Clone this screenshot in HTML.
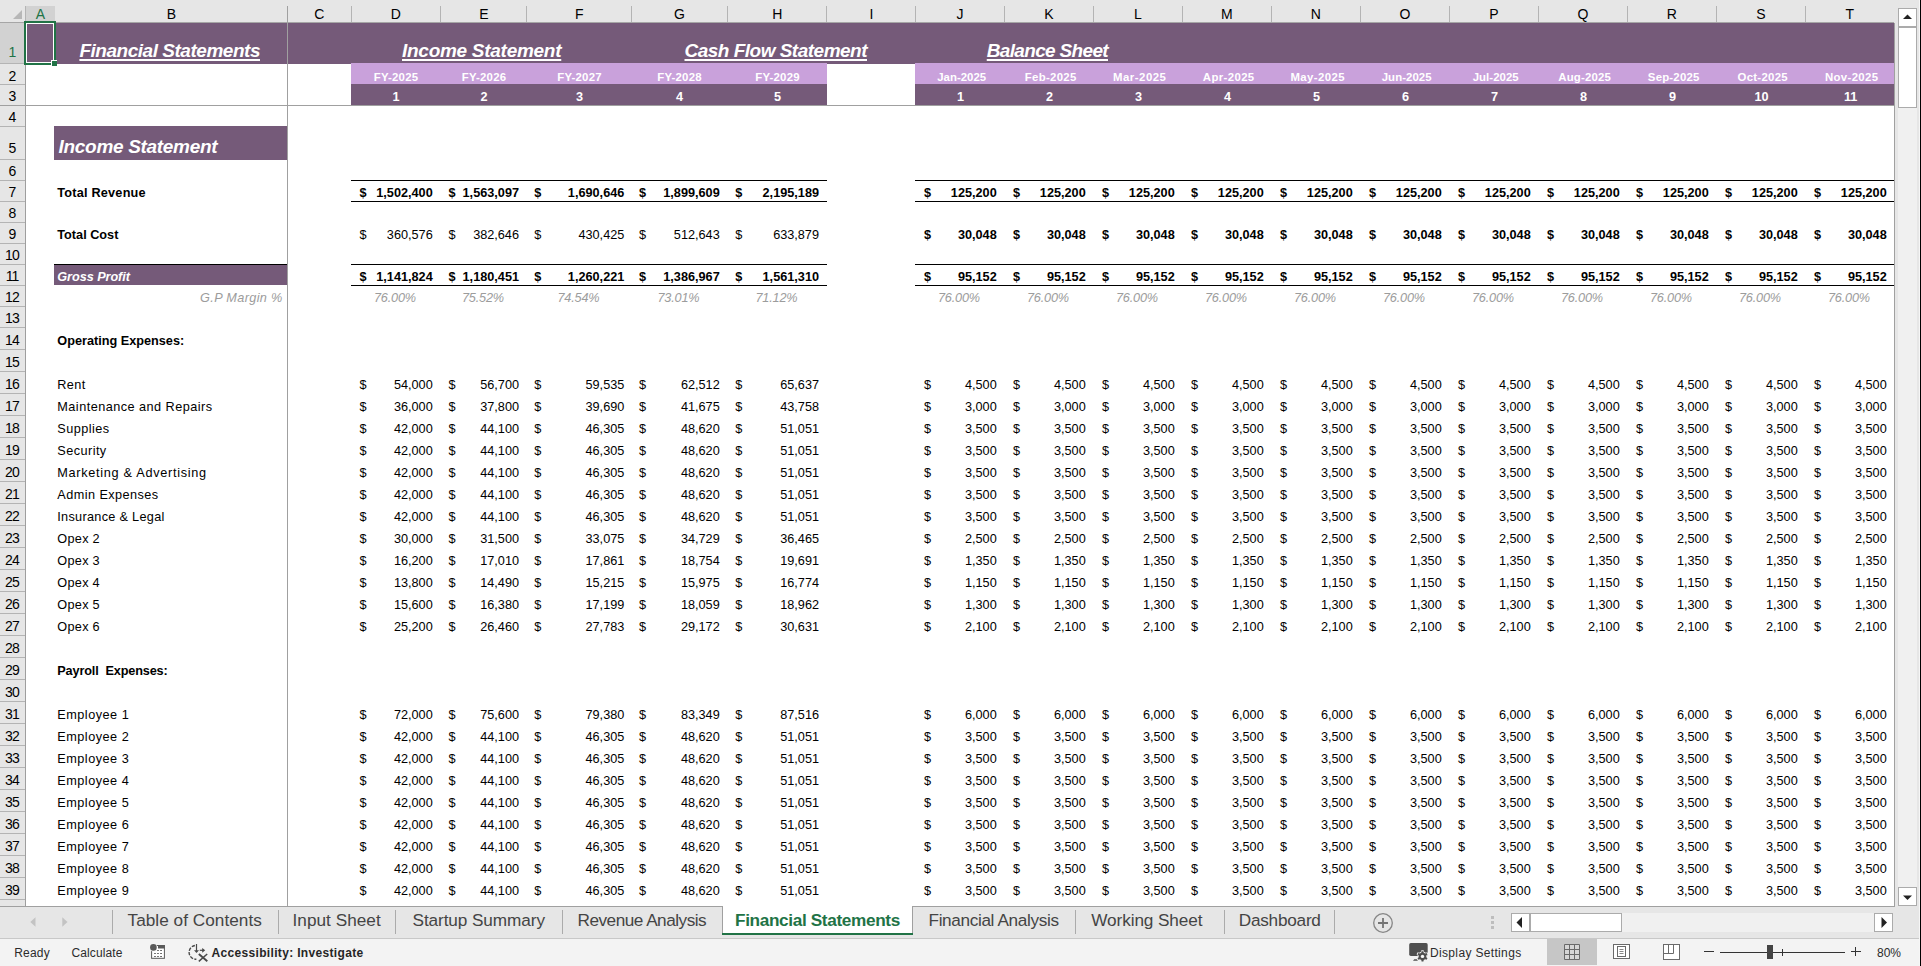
<!DOCTYPE html>
<html><head><meta charset="utf-8"><title>Financial Statements</title><style>
html,body{margin:0;padding:0;overflow:hidden;}
html{width:1921px;height:966px;}
body{width:1921px;height:966px;overflow:hidden;background:#fff;position:relative;font-family:"Liberation Sans",sans-serif;}
body>div,body>svg{position:absolute;}
.t{white-space:pre;overflow:visible;}
</style></head><body>
<div style="left:0px;top:0px;width:1921px;height:23px;background:#e6e6e6;"></div>
<div style="left:0px;top:23px;width:25px;height:883px;background:#e6e6e6;"></div>
<div style="left:26px;top:6px;width:29px;height:16px;background:#d2d2d2;"></div>
<div style="left:0px;top:23px;width:25px;height:41px;background:#d2d2d2;"></div>
<div style="left:0px;top:22px;width:1894px;height:1px;background:#a6a6a6;"></div>
<div style="left:25px;top:23px;width:1px;height:883px;background:#9e9e9e;"></div>
<div style="left:351px;top:6px;width:1px;height:16px;background:#b4b4b4;"></div>
<div style="left:440px;top:6px;width:1px;height:16px;background:#b4b4b4;"></div>
<div style="left:526px;top:6px;width:1px;height:16px;background:#b4b4b4;"></div>
<div style="left:631px;top:6px;width:1px;height:16px;background:#b4b4b4;"></div>
<div style="left:727px;top:6px;width:1px;height:16px;background:#b4b4b4;"></div>
<div style="left:826px;top:6px;width:1px;height:16px;background:#b4b4b4;"></div>
<div style="left:915px;top:6px;width:1px;height:16px;background:#b4b4b4;"></div>
<div style="left:1004px;top:6px;width:1px;height:16px;background:#b4b4b4;"></div>
<div style="left:1093px;top:6px;width:1px;height:16px;background:#b4b4b4;"></div>
<div style="left:1182px;top:6px;width:1px;height:16px;background:#b4b4b4;"></div>
<div style="left:1271px;top:6px;width:1px;height:16px;background:#b4b4b4;"></div>
<div style="left:1360px;top:6px;width:1px;height:16px;background:#b4b4b4;"></div>
<div style="left:1449px;top:6px;width:1px;height:16px;background:#b4b4b4;"></div>
<div style="left:1538px;top:6px;width:1px;height:16px;background:#b4b4b4;"></div>
<div style="left:1627px;top:6px;width:1px;height:16px;background:#b4b4b4;"></div>
<div style="left:1716px;top:6px;width:1px;height:16px;background:#b4b4b4;"></div>
<div style="left:1805px;top:6px;width:1px;height:16px;background:#b4b4b4;"></div>
<div style="left:25px;top:6px;width:1px;height:16px;background:#b4b4b4;"></div>
<svg style="left:13px;top:10px" width="9" height="9"><path d="M9 0 L9 9 L0 9 Z" fill="#b7b7b7"/></svg>
<div class="t " style="top:2px;height:24px;line-height:24px;font-size:14px;color:#217346;left:-19.60px;width:120px;text-align:center;">A</div>
<div class="t " style="top:2px;height:24px;line-height:24px;font-size:14px;color:#000;left:111.40px;width:120px;text-align:center;">B</div>
<div class="t " style="top:2px;height:24px;line-height:24px;font-size:14px;color:#000;left:259.40px;width:120px;text-align:center;">C</div>
<div class="t " style="top:2px;height:24px;line-height:24px;font-size:14px;color:#000;left:335.90px;width:120px;text-align:center;">D</div>
<div class="t " style="top:2px;height:24px;line-height:24px;font-size:14px;color:#000;left:423.90px;width:120px;text-align:center;">E</div>
<div class="t " style="top:2px;height:24px;line-height:24px;font-size:14px;color:#000;left:519.40px;width:120px;text-align:center;">F</div>
<div class="t " style="top:2px;height:24px;line-height:24px;font-size:14px;color:#000;left:619.40px;width:120px;text-align:center;">G</div>
<div class="t " style="top:2px;height:24px;line-height:24px;font-size:14px;color:#000;left:717.40px;width:120px;text-align:center;">H</div>
<div class="t " style="top:2px;height:24px;line-height:24px;font-size:14px;color:#000;left:811.40px;width:120px;text-align:center;">I</div>
<div class="t " style="top:2px;height:24px;line-height:24px;font-size:14px;color:#000;left:899.90px;width:120px;text-align:center;">J</div>
<div class="t " style="top:2px;height:24px;line-height:24px;font-size:14px;color:#000;left:988.90px;width:120px;text-align:center;">K</div>
<div class="t " style="top:2px;height:24px;line-height:24px;font-size:14px;color:#000;left:1077.90px;width:120px;text-align:center;">L</div>
<div class="t " style="top:2px;height:24px;line-height:24px;font-size:14px;color:#000;left:1166.90px;width:120px;text-align:center;">M</div>
<div class="t " style="top:2px;height:24px;line-height:24px;font-size:14px;color:#000;left:1255.90px;width:120px;text-align:center;">N</div>
<div class="t " style="top:2px;height:24px;line-height:24px;font-size:14px;color:#000;left:1344.90px;width:120px;text-align:center;">O</div>
<div class="t " style="top:2px;height:24px;line-height:24px;font-size:14px;color:#000;left:1433.90px;width:120px;text-align:center;">P</div>
<div class="t " style="top:2px;height:24px;line-height:24px;font-size:14px;color:#000;left:1522.90px;width:120px;text-align:center;">Q</div>
<div class="t " style="top:2px;height:24px;line-height:24px;font-size:14px;color:#000;left:1611.90px;width:120px;text-align:center;">R</div>
<div class="t " style="top:2px;height:24px;line-height:24px;font-size:14px;color:#000;left:1700.90px;width:120px;text-align:center;">S</div>
<div class="t " style="top:2px;height:24px;line-height:24px;font-size:14px;color:#000;left:1789.90px;width:120px;text-align:center;">T</div>
<div style="left:0px;top:63px;width:25px;height:1px;background:#b4b4b4;"></div>
<div class="t " style="top:40px;height:24px;line-height:24px;font-size:14px;color:#217346;left:-47.50px;width:120px;text-align:center;">1</div>
<div style="left:0px;top:84px;width:25px;height:1px;background:#b4b4b4;"></div>
<div class="t " style="top:64px;height:24px;line-height:24px;font-size:14px;color:#000;left:-47.50px;width:120px;text-align:center;">2</div>
<div style="left:0px;top:105px;width:25px;height:1px;background:#b4b4b4;"></div>
<div class="t " style="top:84px;height:24px;line-height:24px;font-size:14px;color:#000;left:-47.50px;width:120px;text-align:center;">3</div>
<div style="left:0px;top:126px;width:25px;height:1px;background:#b4b4b4;"></div>
<div class="t " style="top:105px;height:24px;line-height:24px;font-size:14px;color:#000;left:-47.50px;width:120px;text-align:center;">4</div>
<div style="left:0px;top:159px;width:25px;height:1px;background:#b4b4b4;"></div>
<div class="t " style="top:136px;height:24px;line-height:24px;font-size:14px;color:#000;left:-47.50px;width:120px;text-align:center;">5</div>
<div style="left:0px;top:180px;width:25px;height:1px;background:#b4b4b4;"></div>
<div class="t " style="top:159px;height:24px;line-height:24px;font-size:14px;color:#000;left:-47.50px;width:120px;text-align:center;">6</div>
<div style="left:0px;top:201px;width:25px;height:1px;background:#b4b4b4;"></div>
<div class="t " style="top:180px;height:24px;line-height:24px;font-size:14px;color:#000;left:-47.50px;width:120px;text-align:center;">7</div>
<div style="left:0px;top:222px;width:25px;height:1px;background:#b4b4b4;"></div>
<div class="t " style="top:201px;height:24px;line-height:24px;font-size:14px;color:#000;left:-47.50px;width:120px;text-align:center;">8</div>
<div style="left:0px;top:243px;width:25px;height:1px;background:#b4b4b4;"></div>
<div class="t " style="top:222px;height:24px;line-height:24px;font-size:14px;color:#000;left:-47.50px;width:120px;text-align:center;">9</div>
<div style="left:0px;top:264px;width:25px;height:1px;background:#b4b4b4;"></div>
<div class="t " style="top:243px;height:24px;line-height:24px;font-size:14px;color:#000;left:-47.90px;width:120px;text-align:center;letter-spacing:-0.8px;">10</div>
<div style="left:0px;top:285px;width:25px;height:1px;background:#b4b4b4;"></div>
<div class="t " style="top:264px;height:24px;line-height:24px;font-size:14px;color:#000;left:-47.90px;width:120px;text-align:center;letter-spacing:-0.8px;">11</div>
<div style="left:0px;top:306px;width:25px;height:1px;background:#b4b4b4;"></div>
<div class="t " style="top:285px;height:24px;line-height:24px;font-size:14px;color:#000;left:-47.90px;width:120px;text-align:center;letter-spacing:-0.8px;">12</div>
<div style="left:0px;top:327px;width:25px;height:1px;background:#b4b4b4;"></div>
<div class="t " style="top:306px;height:24px;line-height:24px;font-size:14px;color:#000;left:-47.90px;width:120px;text-align:center;letter-spacing:-0.8px;">13</div>
<div style="left:0px;top:349px;width:25px;height:1px;background:#b4b4b4;"></div>
<div class="t " style="top:328px;height:24px;line-height:24px;font-size:14px;color:#000;left:-47.90px;width:120px;text-align:center;letter-spacing:-0.8px;">14</div>
<div style="left:0px;top:371px;width:25px;height:1px;background:#b4b4b4;"></div>
<div class="t " style="top:350px;height:24px;line-height:24px;font-size:14px;color:#000;left:-47.90px;width:120px;text-align:center;letter-spacing:-0.8px;">15</div>
<div style="left:0px;top:393px;width:25px;height:1px;background:#b4b4b4;"></div>
<div class="t " style="top:372px;height:24px;line-height:24px;font-size:14px;color:#000;left:-47.90px;width:120px;text-align:center;letter-spacing:-0.8px;">16</div>
<div style="left:0px;top:415px;width:25px;height:1px;background:#b4b4b4;"></div>
<div class="t " style="top:394px;height:24px;line-height:24px;font-size:14px;color:#000;left:-47.90px;width:120px;text-align:center;letter-spacing:-0.8px;">17</div>
<div style="left:0px;top:437px;width:25px;height:1px;background:#b4b4b4;"></div>
<div class="t " style="top:416px;height:24px;line-height:24px;font-size:14px;color:#000;left:-47.90px;width:120px;text-align:center;letter-spacing:-0.8px;">18</div>
<div style="left:0px;top:459px;width:25px;height:1px;background:#b4b4b4;"></div>
<div class="t " style="top:438px;height:24px;line-height:24px;font-size:14px;color:#000;left:-47.90px;width:120px;text-align:center;letter-spacing:-0.8px;">19</div>
<div style="left:0px;top:481px;width:25px;height:1px;background:#b4b4b4;"></div>
<div class="t " style="top:460px;height:24px;line-height:24px;font-size:14px;color:#000;left:-47.90px;width:120px;text-align:center;letter-spacing:-0.8px;">20</div>
<div style="left:0px;top:503px;width:25px;height:1px;background:#b4b4b4;"></div>
<div class="t " style="top:482px;height:24px;line-height:24px;font-size:14px;color:#000;left:-47.90px;width:120px;text-align:center;letter-spacing:-0.8px;">21</div>
<div style="left:0px;top:525px;width:25px;height:1px;background:#b4b4b4;"></div>
<div class="t " style="top:504px;height:24px;line-height:24px;font-size:14px;color:#000;left:-47.90px;width:120px;text-align:center;letter-spacing:-0.8px;">22</div>
<div style="left:0px;top:547px;width:25px;height:1px;background:#b4b4b4;"></div>
<div class="t " style="top:526px;height:24px;line-height:24px;font-size:14px;color:#000;left:-47.90px;width:120px;text-align:center;letter-spacing:-0.8px;">23</div>
<div style="left:0px;top:569px;width:25px;height:1px;background:#b4b4b4;"></div>
<div class="t " style="top:548px;height:24px;line-height:24px;font-size:14px;color:#000;left:-47.90px;width:120px;text-align:center;letter-spacing:-0.8px;">24</div>
<div style="left:0px;top:591px;width:25px;height:1px;background:#b4b4b4;"></div>
<div class="t " style="top:570px;height:24px;line-height:24px;font-size:14px;color:#000;left:-47.90px;width:120px;text-align:center;letter-spacing:-0.8px;">25</div>
<div style="left:0px;top:613px;width:25px;height:1px;background:#b4b4b4;"></div>
<div class="t " style="top:592px;height:24px;line-height:24px;font-size:14px;color:#000;left:-47.90px;width:120px;text-align:center;letter-spacing:-0.8px;">26</div>
<div style="left:0px;top:635px;width:25px;height:1px;background:#b4b4b4;"></div>
<div class="t " style="top:614px;height:24px;line-height:24px;font-size:14px;color:#000;left:-47.90px;width:120px;text-align:center;letter-spacing:-0.8px;">27</div>
<div style="left:0px;top:657px;width:25px;height:1px;background:#b4b4b4;"></div>
<div class="t " style="top:636px;height:24px;line-height:24px;font-size:14px;color:#000;left:-47.90px;width:120px;text-align:center;letter-spacing:-0.8px;">28</div>
<div style="left:0px;top:679px;width:25px;height:1px;background:#b4b4b4;"></div>
<div class="t " style="top:658px;height:24px;line-height:24px;font-size:14px;color:#000;left:-47.90px;width:120px;text-align:center;letter-spacing:-0.8px;">29</div>
<div style="left:0px;top:701px;width:25px;height:1px;background:#b4b4b4;"></div>
<div class="t " style="top:680px;height:24px;line-height:24px;font-size:14px;color:#000;left:-47.90px;width:120px;text-align:center;letter-spacing:-0.8px;">30</div>
<div style="left:0px;top:723px;width:25px;height:1px;background:#b4b4b4;"></div>
<div class="t " style="top:702px;height:24px;line-height:24px;font-size:14px;color:#000;left:-47.90px;width:120px;text-align:center;letter-spacing:-0.8px;">31</div>
<div style="left:0px;top:745px;width:25px;height:1px;background:#b4b4b4;"></div>
<div class="t " style="top:724px;height:24px;line-height:24px;font-size:14px;color:#000;left:-47.90px;width:120px;text-align:center;letter-spacing:-0.8px;">32</div>
<div style="left:0px;top:767px;width:25px;height:1px;background:#b4b4b4;"></div>
<div class="t " style="top:746px;height:24px;line-height:24px;font-size:14px;color:#000;left:-47.90px;width:120px;text-align:center;letter-spacing:-0.8px;">33</div>
<div style="left:0px;top:789px;width:25px;height:1px;background:#b4b4b4;"></div>
<div class="t " style="top:768px;height:24px;line-height:24px;font-size:14px;color:#000;left:-47.90px;width:120px;text-align:center;letter-spacing:-0.8px;">34</div>
<div style="left:0px;top:811px;width:25px;height:1px;background:#b4b4b4;"></div>
<div class="t " style="top:790px;height:24px;line-height:24px;font-size:14px;color:#000;left:-47.90px;width:120px;text-align:center;letter-spacing:-0.8px;">35</div>
<div style="left:0px;top:833px;width:25px;height:1px;background:#b4b4b4;"></div>
<div class="t " style="top:812px;height:24px;line-height:24px;font-size:14px;color:#000;left:-47.90px;width:120px;text-align:center;letter-spacing:-0.8px;">36</div>
<div style="left:0px;top:855px;width:25px;height:1px;background:#b4b4b4;"></div>
<div class="t " style="top:834px;height:24px;line-height:24px;font-size:14px;color:#000;left:-47.90px;width:120px;text-align:center;letter-spacing:-0.8px;">37</div>
<div style="left:0px;top:877px;width:25px;height:1px;background:#b4b4b4;"></div>
<div class="t " style="top:856px;height:24px;line-height:24px;font-size:14px;color:#000;left:-47.90px;width:120px;text-align:center;letter-spacing:-0.8px;">38</div>
<div style="left:0px;top:899px;width:25px;height:1px;background:#b4b4b4;"></div>
<div class="t " style="top:878px;height:24px;line-height:24px;font-size:14px;color:#000;left:-47.90px;width:120px;text-align:center;letter-spacing:-0.8px;">39</div>
<div style="left:26px;top:23px;width:1868px;height:41px;background:#755a79;"></div>
<div style="left:351px;top:63px;width:476px;height:21px;background:#c9a1db;"></div>
<div style="left:351px;top:84px;width:476px;height:21px;background:#755a79;"></div>
<div style="left:915px;top:63px;width:979px;height:21px;background:#c9a1db;"></div>
<div style="left:915px;top:84px;width:979px;height:21px;background:#755a79;"></div>
<div style="left:287px;top:6px;width:1px;height:900px;background:#a0a0a0;"></div>
<div style="left:0px;top:105px;width:1894px;height:1px;background:#a0a0a0;"></div>
<div style="left:54px;top:126px;width:233px;height:34px;background:#755a79;"></div>
<div style="left:54px;top:265px;width:233px;height:20px;background:#755a79;"></div>
<div style="left:54px;top:264px;width:233px;height:1px;background:#000;"></div>
<div style="left:351px;top:180px;width:476px;height:1px;background:#000;"></div>
<div style="left:351px;top:201px;width:476px;height:1px;background:#000;"></div>
<div style="left:351px;top:264px;width:476px;height:1px;background:#000;"></div>
<div style="left:351px;top:285px;width:476px;height:1px;background:#000;"></div>
<div style="left:915px;top:180px;width:979px;height:1px;background:#000;"></div>
<div style="left:915px;top:201px;width:979px;height:1px;background:#000;"></div>
<div style="left:915px;top:264px;width:979px;height:1px;background:#000;"></div>
<div style="left:915px;top:285px;width:979px;height:1px;background:#000;"></div>
<div style="left:24px;top:21px;width:28px;height:40px;border:2px solid #217346;box-shadow:inset 0 0 0 1px #fff;background:transparent"></div>
<div style="left:51px;top:60px;width:5px;height:5px;background:#217346;border-left:1px solid #fff;border-top:1px solid #fff;"></div>
<div class="t " style="top:39px;height:24px;line-height:24px;font-size:19px;color:#fff;letter-spacing:-0.473px;font-weight:bold;font-style:italic;left:79.40px;text-decoration:underline;text-decoration-thickness:1.5px;text-underline-offset:2.3px;">Financial Statements</div>
<div class="t " style="top:39px;height:24px;line-height:24px;font-size:19px;color:#fff;letter-spacing:-0.275px;font-weight:bold;font-style:italic;left:402.00px;text-decoration:underline;text-decoration-thickness:1.5px;text-underline-offset:2.3px;">Income Statement</div>
<div class="t " style="top:39px;height:24px;line-height:24px;font-size:19px;color:#fff;letter-spacing:-0.508px;font-weight:bold;font-style:italic;left:684.50px;text-decoration:underline;text-decoration-thickness:1.5px;text-underline-offset:2.3px;">Cash Flow Statement</div>
<div class="t " style="top:39px;height:24px;line-height:24px;font-size:19px;color:#fff;letter-spacing:-0.665px;font-weight:bold;font-style:italic;left:986.75px;text-decoration:underline;text-decoration-thickness:1.5px;text-underline-offset:2.3px;">Balance Sheet</div>
<div class="t " style="top:135px;height:24px;line-height:24px;font-size:19px;color:#fff;letter-spacing:-0.316px;font-weight:bold;font-style:italic;left:58.60px;">Income Statement</div>
<div class="t " style="top:65px;height:24px;line-height:24px;font-size:11.4px;color:#fff;letter-spacing:0.186px;font-weight:bold;left:336.00px;width:120px;text-align:center;">FY-2025</div>
<div class="t " style="top:85px;height:24px;line-height:24px;font-size:12.7px;color:#fff;font-weight:bold;left:336.10px;width:120px;text-align:center;">1</div>
<div class="t " style="top:65px;height:24px;line-height:24px;font-size:11.4px;color:#fff;letter-spacing:0.186px;font-weight:bold;left:424.00px;width:120px;text-align:center;">FY-2026</div>
<div class="t " style="top:85px;height:24px;line-height:24px;font-size:12.7px;color:#fff;font-weight:bold;left:424.10px;width:120px;text-align:center;">2</div>
<div class="t " style="top:65px;height:24px;line-height:24px;font-size:11.4px;color:#fff;letter-spacing:0.186px;font-weight:bold;left:519.50px;width:120px;text-align:center;">FY-2027</div>
<div class="t " style="top:85px;height:24px;line-height:24px;font-size:12.7px;color:#fff;font-weight:bold;left:519.60px;width:120px;text-align:center;">3</div>
<div class="t " style="top:65px;height:24px;line-height:24px;font-size:11.4px;color:#fff;letter-spacing:0.186px;font-weight:bold;left:619.50px;width:120px;text-align:center;">FY-2028</div>
<div class="t " style="top:85px;height:24px;line-height:24px;font-size:12.7px;color:#fff;font-weight:bold;left:619.60px;width:120px;text-align:center;">4</div>
<div class="t " style="top:65px;height:24px;line-height:24px;font-size:11.4px;color:#fff;letter-spacing:0.186px;font-weight:bold;left:717.50px;width:120px;text-align:center;">FY-2029</div>
<div class="t " style="top:85px;height:24px;line-height:24px;font-size:12.7px;color:#fff;font-weight:bold;left:717.60px;width:120px;text-align:center;">5</div>
<div class="t " style="top:65px;height:24px;line-height:24px;font-size:11.4px;color:#fff;letter-spacing:0.025px;font-weight:bold;left:901.70px;width:120px;text-align:center;">Jan-2025</div>
<div class="t " style="top:85px;height:24px;line-height:24px;font-size:12.7px;color:#fff;font-weight:bold;left:900.60px;width:120px;text-align:center;">1</div>
<div class="t " style="top:65px;height:24px;line-height:24px;font-size:11.4px;color:#fff;letter-spacing:0.322px;font-weight:bold;left:990.70px;width:120px;text-align:center;">Feb-2025</div>
<div class="t " style="top:85px;height:24px;line-height:24px;font-size:12.7px;color:#fff;font-weight:bold;left:989.60px;width:120px;text-align:center;">2</div>
<div class="t " style="top:65px;height:24px;line-height:24px;font-size:11.4px;color:#fff;letter-spacing:0.509px;font-weight:bold;left:1079.70px;width:120px;text-align:center;">Mar-2025</div>
<div class="t " style="top:85px;height:24px;line-height:24px;font-size:12.7px;color:#fff;font-weight:bold;left:1078.60px;width:120px;text-align:center;">3</div>
<div class="t " style="top:65px;height:24px;line-height:24px;font-size:11.4px;color:#fff;letter-spacing:0.370px;font-weight:bold;left:1168.70px;width:120px;text-align:center;">Apr-2025</div>
<div class="t " style="top:85px;height:24px;line-height:24px;font-size:12.7px;color:#fff;font-weight:bold;left:1167.60px;width:120px;text-align:center;">4</div>
<div class="t " style="top:65px;height:24px;line-height:24px;font-size:11.4px;color:#fff;letter-spacing:0.396px;font-weight:bold;left:1257.70px;width:120px;text-align:center;">May-2025</div>
<div class="t " style="top:85px;height:24px;line-height:24px;font-size:12.7px;color:#fff;font-weight:bold;left:1256.60px;width:120px;text-align:center;">5</div>
<div class="t " style="top:65px;height:24px;line-height:24px;font-size:11.4px;color:#fff;letter-spacing:0.072px;font-weight:bold;left:1346.70px;width:120px;text-align:center;">Jun-2025</div>
<div class="t " style="top:85px;height:24px;line-height:24px;font-size:12.7px;color:#fff;font-weight:bold;left:1345.60px;width:120px;text-align:center;">6</div>
<div class="t " style="top:65px;height:24px;line-height:24px;font-size:11.4px;color:#fff;letter-spacing:0.046px;font-weight:bold;left:1435.70px;width:120px;text-align:center;">Jul-2025</div>
<div class="t " style="top:85px;height:24px;line-height:24px;font-size:12.7px;color:#fff;font-weight:bold;left:1434.60px;width:120px;text-align:center;">7</div>
<div class="t " style="top:65px;height:24px;line-height:24px;font-size:11.4px;color:#fff;letter-spacing:0.173px;font-weight:bold;left:1524.70px;width:120px;text-align:center;">Aug-2025</div>
<div class="t " style="top:85px;height:24px;line-height:24px;font-size:12.7px;color:#fff;font-weight:bold;left:1523.60px;width:120px;text-align:center;">8</div>
<div class="t " style="top:65px;height:24px;line-height:24px;font-size:11.4px;color:#fff;letter-spacing:0.204px;font-weight:bold;left:1613.70px;width:120px;text-align:center;">Sep-2025</div>
<div class="t " style="top:85px;height:24px;line-height:24px;font-size:12.7px;color:#fff;font-weight:bold;left:1612.60px;width:120px;text-align:center;">9</div>
<div class="t " style="top:65px;height:24px;line-height:24px;font-size:11.4px;color:#fff;letter-spacing:0.280px;font-weight:bold;left:1702.70px;width:120px;text-align:center;">Oct-2025</div>
<div class="t " style="top:85px;height:24px;line-height:24px;font-size:12.7px;color:#fff;font-weight:bold;left:1701.60px;width:120px;text-align:center;">10</div>
<div class="t " style="top:65px;height:24px;line-height:24px;font-size:11.4px;color:#fff;letter-spacing:0.351px;font-weight:bold;left:1791.70px;width:120px;text-align:center;">Nov-2025</div>
<div class="t " style="top:85px;height:24px;line-height:24px;font-size:12.7px;color:#fff;font-weight:bold;left:1790.60px;width:120px;text-align:center;">11</div>
<div class="t " style="top:181px;height:24px;line-height:24px;font-size:12.7px;color:#000;letter-spacing:0.211px;font-weight:bold;left:57.30px;">Total Revenue</div>
<div class="t " style="top:223px;height:24px;line-height:24px;font-size:12.7px;color:#000;font-weight:bold;left:57.30px;">Total Cost</div>
<div class="t " style="top:265px;height:24px;line-height:24px;font-size:12.7px;color:#fff;letter-spacing:-0.058px;font-weight:bold;font-style:italic;left:57.30px;">Gross Profit</div>
<div class="t " style="top:329px;height:24px;line-height:24px;font-size:12.7px;color:#000;font-weight:bold;left:57.30px;">Operating Expenses:</div>
<div class="t " style="top:373px;height:24px;line-height:24px;font-size:12.7px;color:#000;letter-spacing:0.393px;left:57.30px;">Rent</div>
<div class="t " style="top:395px;height:24px;line-height:24px;font-size:12.7px;color:#000;letter-spacing:0.464px;left:57.30px;">Maintenance and Repairs</div>
<div class="t " style="top:417px;height:24px;line-height:24px;font-size:12.7px;color:#000;letter-spacing:0.460px;left:57.30px;">Supplies</div>
<div class="t " style="top:439px;height:24px;line-height:24px;font-size:12.7px;color:#000;letter-spacing:0.440px;left:57.30px;">Security</div>
<div class="t " style="top:461px;height:24px;line-height:24px;font-size:12.7px;color:#000;letter-spacing:0.708px;left:57.30px;">Marketing &amp; Advertising</div>
<div class="t " style="top:483px;height:24px;line-height:24px;font-size:12.7px;color:#000;letter-spacing:0.436px;left:57.30px;">Admin Expenses</div>
<div class="t " style="top:505px;height:24px;line-height:24px;font-size:12.7px;color:#000;letter-spacing:0.296px;left:57.30px;">Insurance &amp; Legal</div>
<div class="t " style="top:527px;height:24px;line-height:24px;font-size:12.7px;color:#000;letter-spacing:0.292px;left:57.30px;">Opex 2</div>
<div class="t " style="top:549px;height:24px;line-height:24px;font-size:12.7px;color:#000;letter-spacing:0.292px;left:57.30px;">Opex 3</div>
<div class="t " style="top:571px;height:24px;line-height:24px;font-size:12.7px;color:#000;letter-spacing:0.292px;left:57.30px;">Opex 4</div>
<div class="t " style="top:593px;height:24px;line-height:24px;font-size:12.7px;color:#000;letter-spacing:0.292px;left:57.30px;">Opex 5</div>
<div class="t " style="top:615px;height:24px;line-height:24px;font-size:12.7px;color:#000;letter-spacing:0.292px;left:57.30px;">Opex 6</div>
<div class="t " style="top:659px;height:24px;line-height:24px;font-size:12.7px;color:#000;letter-spacing:-0.141px;font-weight:bold;left:57.30px;">Payroll  Expenses:</div>
<div class="t " style="top:703px;height:24px;line-height:24px;font-size:12.7px;color:#000;letter-spacing:0.493px;left:57.30px;">Employee 1</div>
<div class="t " style="top:725px;height:24px;line-height:24px;font-size:12.7px;color:#000;letter-spacing:0.493px;left:57.30px;">Employee 2</div>
<div class="t " style="top:747px;height:24px;line-height:24px;font-size:12.7px;color:#000;letter-spacing:0.493px;left:57.30px;">Employee 3</div>
<div class="t " style="top:769px;height:24px;line-height:24px;font-size:12.7px;color:#000;letter-spacing:0.493px;left:57.30px;">Employee 4</div>
<div class="t " style="top:791px;height:24px;line-height:24px;font-size:12.7px;color:#000;letter-spacing:0.493px;left:57.30px;">Employee 5</div>
<div class="t " style="top:813px;height:24px;line-height:24px;font-size:12.7px;color:#000;letter-spacing:0.493px;left:57.30px;">Employee 6</div>
<div class="t " style="top:835px;height:24px;line-height:24px;font-size:12.7px;color:#000;letter-spacing:0.493px;left:57.30px;">Employee 7</div>
<div class="t " style="top:857px;height:24px;line-height:24px;font-size:12.7px;color:#000;letter-spacing:0.493px;left:57.30px;">Employee 8</div>
<div class="t " style="top:879px;height:24px;line-height:24px;font-size:12.7px;color:#000;letter-spacing:0.493px;left:57.30px;">Employee 9</div>
<div class="t " style="top:286px;height:24px;line-height:24px;font-size:12.7px;color:#9c9c9c;letter-spacing:0.344px;font-style:italic;right:1638.30px;text-align:right;">G.P Margin %</div>
<div class="t " style="top:181px;height:24px;line-height:24px;font-size:12.7px;color:#000;font-weight:bold;left:359.40px;">$</div>
<div class="t " style="top:181px;height:24px;line-height:24px;font-size:12.7px;color:#000;font-weight:bold;right:1488.30px;text-align:right;">1,502,400</div>
<div class="t " style="top:181px;height:24px;line-height:24px;font-size:12.7px;color:#000;font-weight:bold;left:448.50px;">$</div>
<div class="t " style="top:181px;height:24px;line-height:24px;font-size:12.7px;color:#000;font-weight:bold;right:1402.00px;text-align:right;">1,563,097</div>
<div class="t " style="top:181px;height:24px;line-height:24px;font-size:12.7px;color:#000;font-weight:bold;left:534.30px;">$</div>
<div class="t " style="top:181px;height:24px;line-height:24px;font-size:12.7px;color:#000;font-weight:bold;right:1296.70px;text-align:right;">1,690,646</div>
<div class="t " style="top:181px;height:24px;line-height:24px;font-size:12.7px;color:#000;font-weight:bold;left:639.00px;">$</div>
<div class="t " style="top:181px;height:24px;line-height:24px;font-size:12.7px;color:#000;font-weight:bold;right:1201.30px;text-align:right;">1,899,609</div>
<div class="t " style="top:181px;height:24px;line-height:24px;font-size:12.7px;color:#000;font-weight:bold;left:735.30px;">$</div>
<div class="t " style="top:181px;height:24px;line-height:24px;font-size:12.7px;color:#000;font-weight:bold;right:1102.00px;text-align:right;">2,195,189</div>
<div class="t " style="top:223px;height:24px;line-height:24px;font-size:12.7px;color:#000;left:359.40px;">$</div>
<div class="t " style="top:223px;height:24px;line-height:24px;font-size:12.7px;color:#000;right:1488.30px;text-align:right;">360,576</div>
<div class="t " style="top:223px;height:24px;line-height:24px;font-size:12.7px;color:#000;left:448.50px;">$</div>
<div class="t " style="top:223px;height:24px;line-height:24px;font-size:12.7px;color:#000;right:1402.00px;text-align:right;">382,646</div>
<div class="t " style="top:223px;height:24px;line-height:24px;font-size:12.7px;color:#000;left:534.30px;">$</div>
<div class="t " style="top:223px;height:24px;line-height:24px;font-size:12.7px;color:#000;right:1296.70px;text-align:right;">430,425</div>
<div class="t " style="top:223px;height:24px;line-height:24px;font-size:12.7px;color:#000;left:639.00px;">$</div>
<div class="t " style="top:223px;height:24px;line-height:24px;font-size:12.7px;color:#000;right:1201.30px;text-align:right;">512,643</div>
<div class="t " style="top:223px;height:24px;line-height:24px;font-size:12.7px;color:#000;left:735.30px;">$</div>
<div class="t " style="top:223px;height:24px;line-height:24px;font-size:12.7px;color:#000;right:1102.00px;text-align:right;">633,879</div>
<div class="t " style="top:265px;height:24px;line-height:24px;font-size:12.7px;color:#000;font-weight:bold;left:359.40px;">$</div>
<div class="t " style="top:265px;height:24px;line-height:24px;font-size:12.7px;color:#000;font-weight:bold;right:1488.30px;text-align:right;">1,141,824</div>
<div class="t " style="top:265px;height:24px;line-height:24px;font-size:12.7px;color:#000;font-weight:bold;left:448.50px;">$</div>
<div class="t " style="top:265px;height:24px;line-height:24px;font-size:12.7px;color:#000;font-weight:bold;right:1402.00px;text-align:right;">1,180,451</div>
<div class="t " style="top:265px;height:24px;line-height:24px;font-size:12.7px;color:#000;font-weight:bold;left:534.30px;">$</div>
<div class="t " style="top:265px;height:24px;line-height:24px;font-size:12.7px;color:#000;font-weight:bold;right:1296.70px;text-align:right;">1,260,221</div>
<div class="t " style="top:265px;height:24px;line-height:24px;font-size:12.7px;color:#000;font-weight:bold;left:639.00px;">$</div>
<div class="t " style="top:265px;height:24px;line-height:24px;font-size:12.7px;color:#000;font-weight:bold;right:1201.30px;text-align:right;">1,386,967</div>
<div class="t " style="top:265px;height:24px;line-height:24px;font-size:12.7px;color:#000;font-weight:bold;left:735.30px;">$</div>
<div class="t " style="top:265px;height:24px;line-height:24px;font-size:12.7px;color:#000;font-weight:bold;right:1102.00px;text-align:right;">1,561,310</div>
<div class="t " style="top:373px;height:24px;line-height:24px;font-size:12.7px;color:#000;left:359.40px;">$</div>
<div class="t " style="top:373px;height:24px;line-height:24px;font-size:12.7px;color:#000;right:1488.30px;text-align:right;">54,000</div>
<div class="t " style="top:373px;height:24px;line-height:24px;font-size:12.7px;color:#000;left:448.50px;">$</div>
<div class="t " style="top:373px;height:24px;line-height:24px;font-size:12.7px;color:#000;right:1402.00px;text-align:right;">56,700</div>
<div class="t " style="top:373px;height:24px;line-height:24px;font-size:12.7px;color:#000;left:534.30px;">$</div>
<div class="t " style="top:373px;height:24px;line-height:24px;font-size:12.7px;color:#000;right:1296.70px;text-align:right;">59,535</div>
<div class="t " style="top:373px;height:24px;line-height:24px;font-size:12.7px;color:#000;left:639.00px;">$</div>
<div class="t " style="top:373px;height:24px;line-height:24px;font-size:12.7px;color:#000;right:1201.30px;text-align:right;">62,512</div>
<div class="t " style="top:373px;height:24px;line-height:24px;font-size:12.7px;color:#000;left:735.30px;">$</div>
<div class="t " style="top:373px;height:24px;line-height:24px;font-size:12.7px;color:#000;right:1102.00px;text-align:right;">65,637</div>
<div class="t " style="top:395px;height:24px;line-height:24px;font-size:12.7px;color:#000;left:359.40px;">$</div>
<div class="t " style="top:395px;height:24px;line-height:24px;font-size:12.7px;color:#000;right:1488.30px;text-align:right;">36,000</div>
<div class="t " style="top:395px;height:24px;line-height:24px;font-size:12.7px;color:#000;left:448.50px;">$</div>
<div class="t " style="top:395px;height:24px;line-height:24px;font-size:12.7px;color:#000;right:1402.00px;text-align:right;">37,800</div>
<div class="t " style="top:395px;height:24px;line-height:24px;font-size:12.7px;color:#000;left:534.30px;">$</div>
<div class="t " style="top:395px;height:24px;line-height:24px;font-size:12.7px;color:#000;right:1296.70px;text-align:right;">39,690</div>
<div class="t " style="top:395px;height:24px;line-height:24px;font-size:12.7px;color:#000;left:639.00px;">$</div>
<div class="t " style="top:395px;height:24px;line-height:24px;font-size:12.7px;color:#000;right:1201.30px;text-align:right;">41,675</div>
<div class="t " style="top:395px;height:24px;line-height:24px;font-size:12.7px;color:#000;left:735.30px;">$</div>
<div class="t " style="top:395px;height:24px;line-height:24px;font-size:12.7px;color:#000;right:1102.00px;text-align:right;">43,758</div>
<div class="t " style="top:527px;height:24px;line-height:24px;font-size:12.7px;color:#000;left:359.40px;">$</div>
<div class="t " style="top:527px;height:24px;line-height:24px;font-size:12.7px;color:#000;right:1488.30px;text-align:right;">30,000</div>
<div class="t " style="top:527px;height:24px;line-height:24px;font-size:12.7px;color:#000;left:448.50px;">$</div>
<div class="t " style="top:527px;height:24px;line-height:24px;font-size:12.7px;color:#000;right:1402.00px;text-align:right;">31,500</div>
<div class="t " style="top:527px;height:24px;line-height:24px;font-size:12.7px;color:#000;left:534.30px;">$</div>
<div class="t " style="top:527px;height:24px;line-height:24px;font-size:12.7px;color:#000;right:1296.70px;text-align:right;">33,075</div>
<div class="t " style="top:527px;height:24px;line-height:24px;font-size:12.7px;color:#000;left:639.00px;">$</div>
<div class="t " style="top:527px;height:24px;line-height:24px;font-size:12.7px;color:#000;right:1201.30px;text-align:right;">34,729</div>
<div class="t " style="top:527px;height:24px;line-height:24px;font-size:12.7px;color:#000;left:735.30px;">$</div>
<div class="t " style="top:527px;height:24px;line-height:24px;font-size:12.7px;color:#000;right:1102.00px;text-align:right;">36,465</div>
<div class="t " style="top:549px;height:24px;line-height:24px;font-size:12.7px;color:#000;left:359.40px;">$</div>
<div class="t " style="top:549px;height:24px;line-height:24px;font-size:12.7px;color:#000;right:1488.30px;text-align:right;">16,200</div>
<div class="t " style="top:549px;height:24px;line-height:24px;font-size:12.7px;color:#000;left:448.50px;">$</div>
<div class="t " style="top:549px;height:24px;line-height:24px;font-size:12.7px;color:#000;right:1402.00px;text-align:right;">17,010</div>
<div class="t " style="top:549px;height:24px;line-height:24px;font-size:12.7px;color:#000;left:534.30px;">$</div>
<div class="t " style="top:549px;height:24px;line-height:24px;font-size:12.7px;color:#000;right:1296.70px;text-align:right;">17,861</div>
<div class="t " style="top:549px;height:24px;line-height:24px;font-size:12.7px;color:#000;left:639.00px;">$</div>
<div class="t " style="top:549px;height:24px;line-height:24px;font-size:12.7px;color:#000;right:1201.30px;text-align:right;">18,754</div>
<div class="t " style="top:549px;height:24px;line-height:24px;font-size:12.7px;color:#000;left:735.30px;">$</div>
<div class="t " style="top:549px;height:24px;line-height:24px;font-size:12.7px;color:#000;right:1102.00px;text-align:right;">19,691</div>
<div class="t " style="top:571px;height:24px;line-height:24px;font-size:12.7px;color:#000;left:359.40px;">$</div>
<div class="t " style="top:571px;height:24px;line-height:24px;font-size:12.7px;color:#000;right:1488.30px;text-align:right;">13,800</div>
<div class="t " style="top:571px;height:24px;line-height:24px;font-size:12.7px;color:#000;left:448.50px;">$</div>
<div class="t " style="top:571px;height:24px;line-height:24px;font-size:12.7px;color:#000;right:1402.00px;text-align:right;">14,490</div>
<div class="t " style="top:571px;height:24px;line-height:24px;font-size:12.7px;color:#000;left:534.30px;">$</div>
<div class="t " style="top:571px;height:24px;line-height:24px;font-size:12.7px;color:#000;right:1296.70px;text-align:right;">15,215</div>
<div class="t " style="top:571px;height:24px;line-height:24px;font-size:12.7px;color:#000;left:639.00px;">$</div>
<div class="t " style="top:571px;height:24px;line-height:24px;font-size:12.7px;color:#000;right:1201.30px;text-align:right;">15,975</div>
<div class="t " style="top:571px;height:24px;line-height:24px;font-size:12.7px;color:#000;left:735.30px;">$</div>
<div class="t " style="top:571px;height:24px;line-height:24px;font-size:12.7px;color:#000;right:1102.00px;text-align:right;">16,774</div>
<div class="t " style="top:593px;height:24px;line-height:24px;font-size:12.7px;color:#000;left:359.40px;">$</div>
<div class="t " style="top:593px;height:24px;line-height:24px;font-size:12.7px;color:#000;right:1488.30px;text-align:right;">15,600</div>
<div class="t " style="top:593px;height:24px;line-height:24px;font-size:12.7px;color:#000;left:448.50px;">$</div>
<div class="t " style="top:593px;height:24px;line-height:24px;font-size:12.7px;color:#000;right:1402.00px;text-align:right;">16,380</div>
<div class="t " style="top:593px;height:24px;line-height:24px;font-size:12.7px;color:#000;left:534.30px;">$</div>
<div class="t " style="top:593px;height:24px;line-height:24px;font-size:12.7px;color:#000;right:1296.70px;text-align:right;">17,199</div>
<div class="t " style="top:593px;height:24px;line-height:24px;font-size:12.7px;color:#000;left:639.00px;">$</div>
<div class="t " style="top:593px;height:24px;line-height:24px;font-size:12.7px;color:#000;right:1201.30px;text-align:right;">18,059</div>
<div class="t " style="top:593px;height:24px;line-height:24px;font-size:12.7px;color:#000;left:735.30px;">$</div>
<div class="t " style="top:593px;height:24px;line-height:24px;font-size:12.7px;color:#000;right:1102.00px;text-align:right;">18,962</div>
<div class="t " style="top:615px;height:24px;line-height:24px;font-size:12.7px;color:#000;left:359.40px;">$</div>
<div class="t " style="top:615px;height:24px;line-height:24px;font-size:12.7px;color:#000;right:1488.30px;text-align:right;">25,200</div>
<div class="t " style="top:615px;height:24px;line-height:24px;font-size:12.7px;color:#000;left:448.50px;">$</div>
<div class="t " style="top:615px;height:24px;line-height:24px;font-size:12.7px;color:#000;right:1402.00px;text-align:right;">26,460</div>
<div class="t " style="top:615px;height:24px;line-height:24px;font-size:12.7px;color:#000;left:534.30px;">$</div>
<div class="t " style="top:615px;height:24px;line-height:24px;font-size:12.7px;color:#000;right:1296.70px;text-align:right;">27,783</div>
<div class="t " style="top:615px;height:24px;line-height:24px;font-size:12.7px;color:#000;left:639.00px;">$</div>
<div class="t " style="top:615px;height:24px;line-height:24px;font-size:12.7px;color:#000;right:1201.30px;text-align:right;">29,172</div>
<div class="t " style="top:615px;height:24px;line-height:24px;font-size:12.7px;color:#000;left:735.30px;">$</div>
<div class="t " style="top:615px;height:24px;line-height:24px;font-size:12.7px;color:#000;right:1102.00px;text-align:right;">30,631</div>
<div class="t " style="top:703px;height:24px;line-height:24px;font-size:12.7px;color:#000;left:359.40px;">$</div>
<div class="t " style="top:703px;height:24px;line-height:24px;font-size:12.7px;color:#000;right:1488.30px;text-align:right;">72,000</div>
<div class="t " style="top:703px;height:24px;line-height:24px;font-size:12.7px;color:#000;left:448.50px;">$</div>
<div class="t " style="top:703px;height:24px;line-height:24px;font-size:12.7px;color:#000;right:1402.00px;text-align:right;">75,600</div>
<div class="t " style="top:703px;height:24px;line-height:24px;font-size:12.7px;color:#000;left:534.30px;">$</div>
<div class="t " style="top:703px;height:24px;line-height:24px;font-size:12.7px;color:#000;right:1296.70px;text-align:right;">79,380</div>
<div class="t " style="top:703px;height:24px;line-height:24px;font-size:12.7px;color:#000;left:639.00px;">$</div>
<div class="t " style="top:703px;height:24px;line-height:24px;font-size:12.7px;color:#000;right:1201.30px;text-align:right;">83,349</div>
<div class="t " style="top:703px;height:24px;line-height:24px;font-size:12.7px;color:#000;left:735.30px;">$</div>
<div class="t " style="top:703px;height:24px;line-height:24px;font-size:12.7px;color:#000;right:1102.00px;text-align:right;">87,516</div>
<div class="t " style="top:417px;height:24px;line-height:24px;font-size:12.7px;color:#000;left:359.40px;">$</div>
<div class="t " style="top:417px;height:24px;line-height:24px;font-size:12.7px;color:#000;right:1488.30px;text-align:right;">42,000</div>
<div class="t " style="top:417px;height:24px;line-height:24px;font-size:12.7px;color:#000;left:448.50px;">$</div>
<div class="t " style="top:417px;height:24px;line-height:24px;font-size:12.7px;color:#000;right:1402.00px;text-align:right;">44,100</div>
<div class="t " style="top:417px;height:24px;line-height:24px;font-size:12.7px;color:#000;left:534.30px;">$</div>
<div class="t " style="top:417px;height:24px;line-height:24px;font-size:12.7px;color:#000;right:1296.70px;text-align:right;">46,305</div>
<div class="t " style="top:417px;height:24px;line-height:24px;font-size:12.7px;color:#000;left:639.00px;">$</div>
<div class="t " style="top:417px;height:24px;line-height:24px;font-size:12.7px;color:#000;right:1201.30px;text-align:right;">48,620</div>
<div class="t " style="top:417px;height:24px;line-height:24px;font-size:12.7px;color:#000;left:735.30px;">$</div>
<div class="t " style="top:417px;height:24px;line-height:24px;font-size:12.7px;color:#000;right:1102.00px;text-align:right;">51,051</div>
<div class="t " style="top:439px;height:24px;line-height:24px;font-size:12.7px;color:#000;left:359.40px;">$</div>
<div class="t " style="top:439px;height:24px;line-height:24px;font-size:12.7px;color:#000;right:1488.30px;text-align:right;">42,000</div>
<div class="t " style="top:439px;height:24px;line-height:24px;font-size:12.7px;color:#000;left:448.50px;">$</div>
<div class="t " style="top:439px;height:24px;line-height:24px;font-size:12.7px;color:#000;right:1402.00px;text-align:right;">44,100</div>
<div class="t " style="top:439px;height:24px;line-height:24px;font-size:12.7px;color:#000;left:534.30px;">$</div>
<div class="t " style="top:439px;height:24px;line-height:24px;font-size:12.7px;color:#000;right:1296.70px;text-align:right;">46,305</div>
<div class="t " style="top:439px;height:24px;line-height:24px;font-size:12.7px;color:#000;left:639.00px;">$</div>
<div class="t " style="top:439px;height:24px;line-height:24px;font-size:12.7px;color:#000;right:1201.30px;text-align:right;">48,620</div>
<div class="t " style="top:439px;height:24px;line-height:24px;font-size:12.7px;color:#000;left:735.30px;">$</div>
<div class="t " style="top:439px;height:24px;line-height:24px;font-size:12.7px;color:#000;right:1102.00px;text-align:right;">51,051</div>
<div class="t " style="top:461px;height:24px;line-height:24px;font-size:12.7px;color:#000;left:359.40px;">$</div>
<div class="t " style="top:461px;height:24px;line-height:24px;font-size:12.7px;color:#000;right:1488.30px;text-align:right;">42,000</div>
<div class="t " style="top:461px;height:24px;line-height:24px;font-size:12.7px;color:#000;left:448.50px;">$</div>
<div class="t " style="top:461px;height:24px;line-height:24px;font-size:12.7px;color:#000;right:1402.00px;text-align:right;">44,100</div>
<div class="t " style="top:461px;height:24px;line-height:24px;font-size:12.7px;color:#000;left:534.30px;">$</div>
<div class="t " style="top:461px;height:24px;line-height:24px;font-size:12.7px;color:#000;right:1296.70px;text-align:right;">46,305</div>
<div class="t " style="top:461px;height:24px;line-height:24px;font-size:12.7px;color:#000;left:639.00px;">$</div>
<div class="t " style="top:461px;height:24px;line-height:24px;font-size:12.7px;color:#000;right:1201.30px;text-align:right;">48,620</div>
<div class="t " style="top:461px;height:24px;line-height:24px;font-size:12.7px;color:#000;left:735.30px;">$</div>
<div class="t " style="top:461px;height:24px;line-height:24px;font-size:12.7px;color:#000;right:1102.00px;text-align:right;">51,051</div>
<div class="t " style="top:483px;height:24px;line-height:24px;font-size:12.7px;color:#000;left:359.40px;">$</div>
<div class="t " style="top:483px;height:24px;line-height:24px;font-size:12.7px;color:#000;right:1488.30px;text-align:right;">42,000</div>
<div class="t " style="top:483px;height:24px;line-height:24px;font-size:12.7px;color:#000;left:448.50px;">$</div>
<div class="t " style="top:483px;height:24px;line-height:24px;font-size:12.7px;color:#000;right:1402.00px;text-align:right;">44,100</div>
<div class="t " style="top:483px;height:24px;line-height:24px;font-size:12.7px;color:#000;left:534.30px;">$</div>
<div class="t " style="top:483px;height:24px;line-height:24px;font-size:12.7px;color:#000;right:1296.70px;text-align:right;">46,305</div>
<div class="t " style="top:483px;height:24px;line-height:24px;font-size:12.7px;color:#000;left:639.00px;">$</div>
<div class="t " style="top:483px;height:24px;line-height:24px;font-size:12.7px;color:#000;right:1201.30px;text-align:right;">48,620</div>
<div class="t " style="top:483px;height:24px;line-height:24px;font-size:12.7px;color:#000;left:735.30px;">$</div>
<div class="t " style="top:483px;height:24px;line-height:24px;font-size:12.7px;color:#000;right:1102.00px;text-align:right;">51,051</div>
<div class="t " style="top:505px;height:24px;line-height:24px;font-size:12.7px;color:#000;left:359.40px;">$</div>
<div class="t " style="top:505px;height:24px;line-height:24px;font-size:12.7px;color:#000;right:1488.30px;text-align:right;">42,000</div>
<div class="t " style="top:505px;height:24px;line-height:24px;font-size:12.7px;color:#000;left:448.50px;">$</div>
<div class="t " style="top:505px;height:24px;line-height:24px;font-size:12.7px;color:#000;right:1402.00px;text-align:right;">44,100</div>
<div class="t " style="top:505px;height:24px;line-height:24px;font-size:12.7px;color:#000;left:534.30px;">$</div>
<div class="t " style="top:505px;height:24px;line-height:24px;font-size:12.7px;color:#000;right:1296.70px;text-align:right;">46,305</div>
<div class="t " style="top:505px;height:24px;line-height:24px;font-size:12.7px;color:#000;left:639.00px;">$</div>
<div class="t " style="top:505px;height:24px;line-height:24px;font-size:12.7px;color:#000;right:1201.30px;text-align:right;">48,620</div>
<div class="t " style="top:505px;height:24px;line-height:24px;font-size:12.7px;color:#000;left:735.30px;">$</div>
<div class="t " style="top:505px;height:24px;line-height:24px;font-size:12.7px;color:#000;right:1102.00px;text-align:right;">51,051</div>
<div class="t " style="top:725px;height:24px;line-height:24px;font-size:12.7px;color:#000;left:359.40px;">$</div>
<div class="t " style="top:725px;height:24px;line-height:24px;font-size:12.7px;color:#000;right:1488.30px;text-align:right;">42,000</div>
<div class="t " style="top:725px;height:24px;line-height:24px;font-size:12.7px;color:#000;left:448.50px;">$</div>
<div class="t " style="top:725px;height:24px;line-height:24px;font-size:12.7px;color:#000;right:1402.00px;text-align:right;">44,100</div>
<div class="t " style="top:725px;height:24px;line-height:24px;font-size:12.7px;color:#000;left:534.30px;">$</div>
<div class="t " style="top:725px;height:24px;line-height:24px;font-size:12.7px;color:#000;right:1296.70px;text-align:right;">46,305</div>
<div class="t " style="top:725px;height:24px;line-height:24px;font-size:12.7px;color:#000;left:639.00px;">$</div>
<div class="t " style="top:725px;height:24px;line-height:24px;font-size:12.7px;color:#000;right:1201.30px;text-align:right;">48,620</div>
<div class="t " style="top:725px;height:24px;line-height:24px;font-size:12.7px;color:#000;left:735.30px;">$</div>
<div class="t " style="top:725px;height:24px;line-height:24px;font-size:12.7px;color:#000;right:1102.00px;text-align:right;">51,051</div>
<div class="t " style="top:747px;height:24px;line-height:24px;font-size:12.7px;color:#000;left:359.40px;">$</div>
<div class="t " style="top:747px;height:24px;line-height:24px;font-size:12.7px;color:#000;right:1488.30px;text-align:right;">42,000</div>
<div class="t " style="top:747px;height:24px;line-height:24px;font-size:12.7px;color:#000;left:448.50px;">$</div>
<div class="t " style="top:747px;height:24px;line-height:24px;font-size:12.7px;color:#000;right:1402.00px;text-align:right;">44,100</div>
<div class="t " style="top:747px;height:24px;line-height:24px;font-size:12.7px;color:#000;left:534.30px;">$</div>
<div class="t " style="top:747px;height:24px;line-height:24px;font-size:12.7px;color:#000;right:1296.70px;text-align:right;">46,305</div>
<div class="t " style="top:747px;height:24px;line-height:24px;font-size:12.7px;color:#000;left:639.00px;">$</div>
<div class="t " style="top:747px;height:24px;line-height:24px;font-size:12.7px;color:#000;right:1201.30px;text-align:right;">48,620</div>
<div class="t " style="top:747px;height:24px;line-height:24px;font-size:12.7px;color:#000;left:735.30px;">$</div>
<div class="t " style="top:747px;height:24px;line-height:24px;font-size:12.7px;color:#000;right:1102.00px;text-align:right;">51,051</div>
<div class="t " style="top:769px;height:24px;line-height:24px;font-size:12.7px;color:#000;left:359.40px;">$</div>
<div class="t " style="top:769px;height:24px;line-height:24px;font-size:12.7px;color:#000;right:1488.30px;text-align:right;">42,000</div>
<div class="t " style="top:769px;height:24px;line-height:24px;font-size:12.7px;color:#000;left:448.50px;">$</div>
<div class="t " style="top:769px;height:24px;line-height:24px;font-size:12.7px;color:#000;right:1402.00px;text-align:right;">44,100</div>
<div class="t " style="top:769px;height:24px;line-height:24px;font-size:12.7px;color:#000;left:534.30px;">$</div>
<div class="t " style="top:769px;height:24px;line-height:24px;font-size:12.7px;color:#000;right:1296.70px;text-align:right;">46,305</div>
<div class="t " style="top:769px;height:24px;line-height:24px;font-size:12.7px;color:#000;left:639.00px;">$</div>
<div class="t " style="top:769px;height:24px;line-height:24px;font-size:12.7px;color:#000;right:1201.30px;text-align:right;">48,620</div>
<div class="t " style="top:769px;height:24px;line-height:24px;font-size:12.7px;color:#000;left:735.30px;">$</div>
<div class="t " style="top:769px;height:24px;line-height:24px;font-size:12.7px;color:#000;right:1102.00px;text-align:right;">51,051</div>
<div class="t " style="top:791px;height:24px;line-height:24px;font-size:12.7px;color:#000;left:359.40px;">$</div>
<div class="t " style="top:791px;height:24px;line-height:24px;font-size:12.7px;color:#000;right:1488.30px;text-align:right;">42,000</div>
<div class="t " style="top:791px;height:24px;line-height:24px;font-size:12.7px;color:#000;left:448.50px;">$</div>
<div class="t " style="top:791px;height:24px;line-height:24px;font-size:12.7px;color:#000;right:1402.00px;text-align:right;">44,100</div>
<div class="t " style="top:791px;height:24px;line-height:24px;font-size:12.7px;color:#000;left:534.30px;">$</div>
<div class="t " style="top:791px;height:24px;line-height:24px;font-size:12.7px;color:#000;right:1296.70px;text-align:right;">46,305</div>
<div class="t " style="top:791px;height:24px;line-height:24px;font-size:12.7px;color:#000;left:639.00px;">$</div>
<div class="t " style="top:791px;height:24px;line-height:24px;font-size:12.7px;color:#000;right:1201.30px;text-align:right;">48,620</div>
<div class="t " style="top:791px;height:24px;line-height:24px;font-size:12.7px;color:#000;left:735.30px;">$</div>
<div class="t " style="top:791px;height:24px;line-height:24px;font-size:12.7px;color:#000;right:1102.00px;text-align:right;">51,051</div>
<div class="t " style="top:813px;height:24px;line-height:24px;font-size:12.7px;color:#000;left:359.40px;">$</div>
<div class="t " style="top:813px;height:24px;line-height:24px;font-size:12.7px;color:#000;right:1488.30px;text-align:right;">42,000</div>
<div class="t " style="top:813px;height:24px;line-height:24px;font-size:12.7px;color:#000;left:448.50px;">$</div>
<div class="t " style="top:813px;height:24px;line-height:24px;font-size:12.7px;color:#000;right:1402.00px;text-align:right;">44,100</div>
<div class="t " style="top:813px;height:24px;line-height:24px;font-size:12.7px;color:#000;left:534.30px;">$</div>
<div class="t " style="top:813px;height:24px;line-height:24px;font-size:12.7px;color:#000;right:1296.70px;text-align:right;">46,305</div>
<div class="t " style="top:813px;height:24px;line-height:24px;font-size:12.7px;color:#000;left:639.00px;">$</div>
<div class="t " style="top:813px;height:24px;line-height:24px;font-size:12.7px;color:#000;right:1201.30px;text-align:right;">48,620</div>
<div class="t " style="top:813px;height:24px;line-height:24px;font-size:12.7px;color:#000;left:735.30px;">$</div>
<div class="t " style="top:813px;height:24px;line-height:24px;font-size:12.7px;color:#000;right:1102.00px;text-align:right;">51,051</div>
<div class="t " style="top:835px;height:24px;line-height:24px;font-size:12.7px;color:#000;left:359.40px;">$</div>
<div class="t " style="top:835px;height:24px;line-height:24px;font-size:12.7px;color:#000;right:1488.30px;text-align:right;">42,000</div>
<div class="t " style="top:835px;height:24px;line-height:24px;font-size:12.7px;color:#000;left:448.50px;">$</div>
<div class="t " style="top:835px;height:24px;line-height:24px;font-size:12.7px;color:#000;right:1402.00px;text-align:right;">44,100</div>
<div class="t " style="top:835px;height:24px;line-height:24px;font-size:12.7px;color:#000;left:534.30px;">$</div>
<div class="t " style="top:835px;height:24px;line-height:24px;font-size:12.7px;color:#000;right:1296.70px;text-align:right;">46,305</div>
<div class="t " style="top:835px;height:24px;line-height:24px;font-size:12.7px;color:#000;left:639.00px;">$</div>
<div class="t " style="top:835px;height:24px;line-height:24px;font-size:12.7px;color:#000;right:1201.30px;text-align:right;">48,620</div>
<div class="t " style="top:835px;height:24px;line-height:24px;font-size:12.7px;color:#000;left:735.30px;">$</div>
<div class="t " style="top:835px;height:24px;line-height:24px;font-size:12.7px;color:#000;right:1102.00px;text-align:right;">51,051</div>
<div class="t " style="top:857px;height:24px;line-height:24px;font-size:12.7px;color:#000;left:359.40px;">$</div>
<div class="t " style="top:857px;height:24px;line-height:24px;font-size:12.7px;color:#000;right:1488.30px;text-align:right;">42,000</div>
<div class="t " style="top:857px;height:24px;line-height:24px;font-size:12.7px;color:#000;left:448.50px;">$</div>
<div class="t " style="top:857px;height:24px;line-height:24px;font-size:12.7px;color:#000;right:1402.00px;text-align:right;">44,100</div>
<div class="t " style="top:857px;height:24px;line-height:24px;font-size:12.7px;color:#000;left:534.30px;">$</div>
<div class="t " style="top:857px;height:24px;line-height:24px;font-size:12.7px;color:#000;right:1296.70px;text-align:right;">46,305</div>
<div class="t " style="top:857px;height:24px;line-height:24px;font-size:12.7px;color:#000;left:639.00px;">$</div>
<div class="t " style="top:857px;height:24px;line-height:24px;font-size:12.7px;color:#000;right:1201.30px;text-align:right;">48,620</div>
<div class="t " style="top:857px;height:24px;line-height:24px;font-size:12.7px;color:#000;left:735.30px;">$</div>
<div class="t " style="top:857px;height:24px;line-height:24px;font-size:12.7px;color:#000;right:1102.00px;text-align:right;">51,051</div>
<div class="t " style="top:879px;height:24px;line-height:24px;font-size:12.7px;color:#000;left:359.40px;">$</div>
<div class="t " style="top:879px;height:24px;line-height:24px;font-size:12.7px;color:#000;right:1488.30px;text-align:right;">42,000</div>
<div class="t " style="top:879px;height:24px;line-height:24px;font-size:12.7px;color:#000;left:448.50px;">$</div>
<div class="t " style="top:879px;height:24px;line-height:24px;font-size:12.7px;color:#000;right:1402.00px;text-align:right;">44,100</div>
<div class="t " style="top:879px;height:24px;line-height:24px;font-size:12.7px;color:#000;left:534.30px;">$</div>
<div class="t " style="top:879px;height:24px;line-height:24px;font-size:12.7px;color:#000;right:1296.70px;text-align:right;">46,305</div>
<div class="t " style="top:879px;height:24px;line-height:24px;font-size:12.7px;color:#000;left:639.00px;">$</div>
<div class="t " style="top:879px;height:24px;line-height:24px;font-size:12.7px;color:#000;right:1201.30px;text-align:right;">48,620</div>
<div class="t " style="top:879px;height:24px;line-height:24px;font-size:12.7px;color:#000;left:735.30px;">$</div>
<div class="t " style="top:879px;height:24px;line-height:24px;font-size:12.7px;color:#000;right:1102.00px;text-align:right;">51,051</div>
<div class="t " style="top:181px;height:24px;line-height:24px;font-size:12.7px;color:#000;font-weight:bold;left:924.00px;">$</div>
<div class="t " style="top:181px;height:24px;line-height:24px;font-size:12.7px;color:#000;font-weight:bold;right:924.30px;text-align:right;">125,200</div>
<div class="t " style="top:181px;height:24px;line-height:24px;font-size:12.7px;color:#000;font-weight:bold;left:1013.00px;">$</div>
<div class="t " style="top:181px;height:24px;line-height:24px;font-size:12.7px;color:#000;font-weight:bold;right:835.30px;text-align:right;">125,200</div>
<div class="t " style="top:181px;height:24px;line-height:24px;font-size:12.7px;color:#000;font-weight:bold;left:1102.00px;">$</div>
<div class="t " style="top:181px;height:24px;line-height:24px;font-size:12.7px;color:#000;font-weight:bold;right:746.30px;text-align:right;">125,200</div>
<div class="t " style="top:181px;height:24px;line-height:24px;font-size:12.7px;color:#000;font-weight:bold;left:1191.00px;">$</div>
<div class="t " style="top:181px;height:24px;line-height:24px;font-size:12.7px;color:#000;font-weight:bold;right:657.30px;text-align:right;">125,200</div>
<div class="t " style="top:181px;height:24px;line-height:24px;font-size:12.7px;color:#000;font-weight:bold;left:1280.00px;">$</div>
<div class="t " style="top:181px;height:24px;line-height:24px;font-size:12.7px;color:#000;font-weight:bold;right:568.30px;text-align:right;">125,200</div>
<div class="t " style="top:181px;height:24px;line-height:24px;font-size:12.7px;color:#000;font-weight:bold;left:1369.00px;">$</div>
<div class="t " style="top:181px;height:24px;line-height:24px;font-size:12.7px;color:#000;font-weight:bold;right:479.30px;text-align:right;">125,200</div>
<div class="t " style="top:181px;height:24px;line-height:24px;font-size:12.7px;color:#000;font-weight:bold;left:1458.00px;">$</div>
<div class="t " style="top:181px;height:24px;line-height:24px;font-size:12.7px;color:#000;font-weight:bold;right:390.30px;text-align:right;">125,200</div>
<div class="t " style="top:181px;height:24px;line-height:24px;font-size:12.7px;color:#000;font-weight:bold;left:1547.00px;">$</div>
<div class="t " style="top:181px;height:24px;line-height:24px;font-size:12.7px;color:#000;font-weight:bold;right:301.30px;text-align:right;">125,200</div>
<div class="t " style="top:181px;height:24px;line-height:24px;font-size:12.7px;color:#000;font-weight:bold;left:1636.00px;">$</div>
<div class="t " style="top:181px;height:24px;line-height:24px;font-size:12.7px;color:#000;font-weight:bold;right:212.30px;text-align:right;">125,200</div>
<div class="t " style="top:181px;height:24px;line-height:24px;font-size:12.7px;color:#000;font-weight:bold;left:1725.00px;">$</div>
<div class="t " style="top:181px;height:24px;line-height:24px;font-size:12.7px;color:#000;font-weight:bold;right:123.30px;text-align:right;">125,200</div>
<div class="t " style="top:181px;height:24px;line-height:24px;font-size:12.7px;color:#000;font-weight:bold;left:1814.00px;">$</div>
<div class="t " style="top:181px;height:24px;line-height:24px;font-size:12.7px;color:#000;font-weight:bold;right:34.30px;text-align:right;">125,200</div>
<div class="t " style="top:223px;height:24px;line-height:24px;font-size:12.7px;color:#000;font-weight:bold;left:924.00px;">$</div>
<div class="t " style="top:223px;height:24px;line-height:24px;font-size:12.7px;color:#000;font-weight:bold;right:924.30px;text-align:right;">30,048</div>
<div class="t " style="top:223px;height:24px;line-height:24px;font-size:12.7px;color:#000;font-weight:bold;left:1013.00px;">$</div>
<div class="t " style="top:223px;height:24px;line-height:24px;font-size:12.7px;color:#000;font-weight:bold;right:835.30px;text-align:right;">30,048</div>
<div class="t " style="top:223px;height:24px;line-height:24px;font-size:12.7px;color:#000;font-weight:bold;left:1102.00px;">$</div>
<div class="t " style="top:223px;height:24px;line-height:24px;font-size:12.7px;color:#000;font-weight:bold;right:746.30px;text-align:right;">30,048</div>
<div class="t " style="top:223px;height:24px;line-height:24px;font-size:12.7px;color:#000;font-weight:bold;left:1191.00px;">$</div>
<div class="t " style="top:223px;height:24px;line-height:24px;font-size:12.7px;color:#000;font-weight:bold;right:657.30px;text-align:right;">30,048</div>
<div class="t " style="top:223px;height:24px;line-height:24px;font-size:12.7px;color:#000;font-weight:bold;left:1280.00px;">$</div>
<div class="t " style="top:223px;height:24px;line-height:24px;font-size:12.7px;color:#000;font-weight:bold;right:568.30px;text-align:right;">30,048</div>
<div class="t " style="top:223px;height:24px;line-height:24px;font-size:12.7px;color:#000;font-weight:bold;left:1369.00px;">$</div>
<div class="t " style="top:223px;height:24px;line-height:24px;font-size:12.7px;color:#000;font-weight:bold;right:479.30px;text-align:right;">30,048</div>
<div class="t " style="top:223px;height:24px;line-height:24px;font-size:12.7px;color:#000;font-weight:bold;left:1458.00px;">$</div>
<div class="t " style="top:223px;height:24px;line-height:24px;font-size:12.7px;color:#000;font-weight:bold;right:390.30px;text-align:right;">30,048</div>
<div class="t " style="top:223px;height:24px;line-height:24px;font-size:12.7px;color:#000;font-weight:bold;left:1547.00px;">$</div>
<div class="t " style="top:223px;height:24px;line-height:24px;font-size:12.7px;color:#000;font-weight:bold;right:301.30px;text-align:right;">30,048</div>
<div class="t " style="top:223px;height:24px;line-height:24px;font-size:12.7px;color:#000;font-weight:bold;left:1636.00px;">$</div>
<div class="t " style="top:223px;height:24px;line-height:24px;font-size:12.7px;color:#000;font-weight:bold;right:212.30px;text-align:right;">30,048</div>
<div class="t " style="top:223px;height:24px;line-height:24px;font-size:12.7px;color:#000;font-weight:bold;left:1725.00px;">$</div>
<div class="t " style="top:223px;height:24px;line-height:24px;font-size:12.7px;color:#000;font-weight:bold;right:123.30px;text-align:right;">30,048</div>
<div class="t " style="top:223px;height:24px;line-height:24px;font-size:12.7px;color:#000;font-weight:bold;left:1814.00px;">$</div>
<div class="t " style="top:223px;height:24px;line-height:24px;font-size:12.7px;color:#000;font-weight:bold;right:34.30px;text-align:right;">30,048</div>
<div class="t " style="top:265px;height:24px;line-height:24px;font-size:12.7px;color:#000;font-weight:bold;left:924.00px;">$</div>
<div class="t " style="top:265px;height:24px;line-height:24px;font-size:12.7px;color:#000;font-weight:bold;right:924.30px;text-align:right;">95,152</div>
<div class="t " style="top:265px;height:24px;line-height:24px;font-size:12.7px;color:#000;font-weight:bold;left:1013.00px;">$</div>
<div class="t " style="top:265px;height:24px;line-height:24px;font-size:12.7px;color:#000;font-weight:bold;right:835.30px;text-align:right;">95,152</div>
<div class="t " style="top:265px;height:24px;line-height:24px;font-size:12.7px;color:#000;font-weight:bold;left:1102.00px;">$</div>
<div class="t " style="top:265px;height:24px;line-height:24px;font-size:12.7px;color:#000;font-weight:bold;right:746.30px;text-align:right;">95,152</div>
<div class="t " style="top:265px;height:24px;line-height:24px;font-size:12.7px;color:#000;font-weight:bold;left:1191.00px;">$</div>
<div class="t " style="top:265px;height:24px;line-height:24px;font-size:12.7px;color:#000;font-weight:bold;right:657.30px;text-align:right;">95,152</div>
<div class="t " style="top:265px;height:24px;line-height:24px;font-size:12.7px;color:#000;font-weight:bold;left:1280.00px;">$</div>
<div class="t " style="top:265px;height:24px;line-height:24px;font-size:12.7px;color:#000;font-weight:bold;right:568.30px;text-align:right;">95,152</div>
<div class="t " style="top:265px;height:24px;line-height:24px;font-size:12.7px;color:#000;font-weight:bold;left:1369.00px;">$</div>
<div class="t " style="top:265px;height:24px;line-height:24px;font-size:12.7px;color:#000;font-weight:bold;right:479.30px;text-align:right;">95,152</div>
<div class="t " style="top:265px;height:24px;line-height:24px;font-size:12.7px;color:#000;font-weight:bold;left:1458.00px;">$</div>
<div class="t " style="top:265px;height:24px;line-height:24px;font-size:12.7px;color:#000;font-weight:bold;right:390.30px;text-align:right;">95,152</div>
<div class="t " style="top:265px;height:24px;line-height:24px;font-size:12.7px;color:#000;font-weight:bold;left:1547.00px;">$</div>
<div class="t " style="top:265px;height:24px;line-height:24px;font-size:12.7px;color:#000;font-weight:bold;right:301.30px;text-align:right;">95,152</div>
<div class="t " style="top:265px;height:24px;line-height:24px;font-size:12.7px;color:#000;font-weight:bold;left:1636.00px;">$</div>
<div class="t " style="top:265px;height:24px;line-height:24px;font-size:12.7px;color:#000;font-weight:bold;right:212.30px;text-align:right;">95,152</div>
<div class="t " style="top:265px;height:24px;line-height:24px;font-size:12.7px;color:#000;font-weight:bold;left:1725.00px;">$</div>
<div class="t " style="top:265px;height:24px;line-height:24px;font-size:12.7px;color:#000;font-weight:bold;right:123.30px;text-align:right;">95,152</div>
<div class="t " style="top:265px;height:24px;line-height:24px;font-size:12.7px;color:#000;font-weight:bold;left:1814.00px;">$</div>
<div class="t " style="top:265px;height:24px;line-height:24px;font-size:12.7px;color:#000;font-weight:bold;right:34.30px;text-align:right;">95,152</div>
<div class="t " style="top:373px;height:24px;line-height:24px;font-size:12.7px;color:#000;left:924.00px;">$</div>
<div class="t " style="top:373px;height:24px;line-height:24px;font-size:12.7px;color:#000;right:924.30px;text-align:right;">4,500</div>
<div class="t " style="top:373px;height:24px;line-height:24px;font-size:12.7px;color:#000;left:1013.00px;">$</div>
<div class="t " style="top:373px;height:24px;line-height:24px;font-size:12.7px;color:#000;right:835.30px;text-align:right;">4,500</div>
<div class="t " style="top:373px;height:24px;line-height:24px;font-size:12.7px;color:#000;left:1102.00px;">$</div>
<div class="t " style="top:373px;height:24px;line-height:24px;font-size:12.7px;color:#000;right:746.30px;text-align:right;">4,500</div>
<div class="t " style="top:373px;height:24px;line-height:24px;font-size:12.7px;color:#000;left:1191.00px;">$</div>
<div class="t " style="top:373px;height:24px;line-height:24px;font-size:12.7px;color:#000;right:657.30px;text-align:right;">4,500</div>
<div class="t " style="top:373px;height:24px;line-height:24px;font-size:12.7px;color:#000;left:1280.00px;">$</div>
<div class="t " style="top:373px;height:24px;line-height:24px;font-size:12.7px;color:#000;right:568.30px;text-align:right;">4,500</div>
<div class="t " style="top:373px;height:24px;line-height:24px;font-size:12.7px;color:#000;left:1369.00px;">$</div>
<div class="t " style="top:373px;height:24px;line-height:24px;font-size:12.7px;color:#000;right:479.30px;text-align:right;">4,500</div>
<div class="t " style="top:373px;height:24px;line-height:24px;font-size:12.7px;color:#000;left:1458.00px;">$</div>
<div class="t " style="top:373px;height:24px;line-height:24px;font-size:12.7px;color:#000;right:390.30px;text-align:right;">4,500</div>
<div class="t " style="top:373px;height:24px;line-height:24px;font-size:12.7px;color:#000;left:1547.00px;">$</div>
<div class="t " style="top:373px;height:24px;line-height:24px;font-size:12.7px;color:#000;right:301.30px;text-align:right;">4,500</div>
<div class="t " style="top:373px;height:24px;line-height:24px;font-size:12.7px;color:#000;left:1636.00px;">$</div>
<div class="t " style="top:373px;height:24px;line-height:24px;font-size:12.7px;color:#000;right:212.30px;text-align:right;">4,500</div>
<div class="t " style="top:373px;height:24px;line-height:24px;font-size:12.7px;color:#000;left:1725.00px;">$</div>
<div class="t " style="top:373px;height:24px;line-height:24px;font-size:12.7px;color:#000;right:123.30px;text-align:right;">4,500</div>
<div class="t " style="top:373px;height:24px;line-height:24px;font-size:12.7px;color:#000;left:1814.00px;">$</div>
<div class="t " style="top:373px;height:24px;line-height:24px;font-size:12.7px;color:#000;right:34.30px;text-align:right;">4,500</div>
<div class="t " style="top:395px;height:24px;line-height:24px;font-size:12.7px;color:#000;left:924.00px;">$</div>
<div class="t " style="top:395px;height:24px;line-height:24px;font-size:12.7px;color:#000;right:924.30px;text-align:right;">3,000</div>
<div class="t " style="top:395px;height:24px;line-height:24px;font-size:12.7px;color:#000;left:1013.00px;">$</div>
<div class="t " style="top:395px;height:24px;line-height:24px;font-size:12.7px;color:#000;right:835.30px;text-align:right;">3,000</div>
<div class="t " style="top:395px;height:24px;line-height:24px;font-size:12.7px;color:#000;left:1102.00px;">$</div>
<div class="t " style="top:395px;height:24px;line-height:24px;font-size:12.7px;color:#000;right:746.30px;text-align:right;">3,000</div>
<div class="t " style="top:395px;height:24px;line-height:24px;font-size:12.7px;color:#000;left:1191.00px;">$</div>
<div class="t " style="top:395px;height:24px;line-height:24px;font-size:12.7px;color:#000;right:657.30px;text-align:right;">3,000</div>
<div class="t " style="top:395px;height:24px;line-height:24px;font-size:12.7px;color:#000;left:1280.00px;">$</div>
<div class="t " style="top:395px;height:24px;line-height:24px;font-size:12.7px;color:#000;right:568.30px;text-align:right;">3,000</div>
<div class="t " style="top:395px;height:24px;line-height:24px;font-size:12.7px;color:#000;left:1369.00px;">$</div>
<div class="t " style="top:395px;height:24px;line-height:24px;font-size:12.7px;color:#000;right:479.30px;text-align:right;">3,000</div>
<div class="t " style="top:395px;height:24px;line-height:24px;font-size:12.7px;color:#000;left:1458.00px;">$</div>
<div class="t " style="top:395px;height:24px;line-height:24px;font-size:12.7px;color:#000;right:390.30px;text-align:right;">3,000</div>
<div class="t " style="top:395px;height:24px;line-height:24px;font-size:12.7px;color:#000;left:1547.00px;">$</div>
<div class="t " style="top:395px;height:24px;line-height:24px;font-size:12.7px;color:#000;right:301.30px;text-align:right;">3,000</div>
<div class="t " style="top:395px;height:24px;line-height:24px;font-size:12.7px;color:#000;left:1636.00px;">$</div>
<div class="t " style="top:395px;height:24px;line-height:24px;font-size:12.7px;color:#000;right:212.30px;text-align:right;">3,000</div>
<div class="t " style="top:395px;height:24px;line-height:24px;font-size:12.7px;color:#000;left:1725.00px;">$</div>
<div class="t " style="top:395px;height:24px;line-height:24px;font-size:12.7px;color:#000;right:123.30px;text-align:right;">3,000</div>
<div class="t " style="top:395px;height:24px;line-height:24px;font-size:12.7px;color:#000;left:1814.00px;">$</div>
<div class="t " style="top:395px;height:24px;line-height:24px;font-size:12.7px;color:#000;right:34.30px;text-align:right;">3,000</div>
<div class="t " style="top:527px;height:24px;line-height:24px;font-size:12.7px;color:#000;left:924.00px;">$</div>
<div class="t " style="top:527px;height:24px;line-height:24px;font-size:12.7px;color:#000;right:924.30px;text-align:right;">2,500</div>
<div class="t " style="top:527px;height:24px;line-height:24px;font-size:12.7px;color:#000;left:1013.00px;">$</div>
<div class="t " style="top:527px;height:24px;line-height:24px;font-size:12.7px;color:#000;right:835.30px;text-align:right;">2,500</div>
<div class="t " style="top:527px;height:24px;line-height:24px;font-size:12.7px;color:#000;left:1102.00px;">$</div>
<div class="t " style="top:527px;height:24px;line-height:24px;font-size:12.7px;color:#000;right:746.30px;text-align:right;">2,500</div>
<div class="t " style="top:527px;height:24px;line-height:24px;font-size:12.7px;color:#000;left:1191.00px;">$</div>
<div class="t " style="top:527px;height:24px;line-height:24px;font-size:12.7px;color:#000;right:657.30px;text-align:right;">2,500</div>
<div class="t " style="top:527px;height:24px;line-height:24px;font-size:12.7px;color:#000;left:1280.00px;">$</div>
<div class="t " style="top:527px;height:24px;line-height:24px;font-size:12.7px;color:#000;right:568.30px;text-align:right;">2,500</div>
<div class="t " style="top:527px;height:24px;line-height:24px;font-size:12.7px;color:#000;left:1369.00px;">$</div>
<div class="t " style="top:527px;height:24px;line-height:24px;font-size:12.7px;color:#000;right:479.30px;text-align:right;">2,500</div>
<div class="t " style="top:527px;height:24px;line-height:24px;font-size:12.7px;color:#000;left:1458.00px;">$</div>
<div class="t " style="top:527px;height:24px;line-height:24px;font-size:12.7px;color:#000;right:390.30px;text-align:right;">2,500</div>
<div class="t " style="top:527px;height:24px;line-height:24px;font-size:12.7px;color:#000;left:1547.00px;">$</div>
<div class="t " style="top:527px;height:24px;line-height:24px;font-size:12.7px;color:#000;right:301.30px;text-align:right;">2,500</div>
<div class="t " style="top:527px;height:24px;line-height:24px;font-size:12.7px;color:#000;left:1636.00px;">$</div>
<div class="t " style="top:527px;height:24px;line-height:24px;font-size:12.7px;color:#000;right:212.30px;text-align:right;">2,500</div>
<div class="t " style="top:527px;height:24px;line-height:24px;font-size:12.7px;color:#000;left:1725.00px;">$</div>
<div class="t " style="top:527px;height:24px;line-height:24px;font-size:12.7px;color:#000;right:123.30px;text-align:right;">2,500</div>
<div class="t " style="top:527px;height:24px;line-height:24px;font-size:12.7px;color:#000;left:1814.00px;">$</div>
<div class="t " style="top:527px;height:24px;line-height:24px;font-size:12.7px;color:#000;right:34.30px;text-align:right;">2,500</div>
<div class="t " style="top:549px;height:24px;line-height:24px;font-size:12.7px;color:#000;left:924.00px;">$</div>
<div class="t " style="top:549px;height:24px;line-height:24px;font-size:12.7px;color:#000;right:924.30px;text-align:right;">1,350</div>
<div class="t " style="top:549px;height:24px;line-height:24px;font-size:12.7px;color:#000;left:1013.00px;">$</div>
<div class="t " style="top:549px;height:24px;line-height:24px;font-size:12.7px;color:#000;right:835.30px;text-align:right;">1,350</div>
<div class="t " style="top:549px;height:24px;line-height:24px;font-size:12.7px;color:#000;left:1102.00px;">$</div>
<div class="t " style="top:549px;height:24px;line-height:24px;font-size:12.7px;color:#000;right:746.30px;text-align:right;">1,350</div>
<div class="t " style="top:549px;height:24px;line-height:24px;font-size:12.7px;color:#000;left:1191.00px;">$</div>
<div class="t " style="top:549px;height:24px;line-height:24px;font-size:12.7px;color:#000;right:657.30px;text-align:right;">1,350</div>
<div class="t " style="top:549px;height:24px;line-height:24px;font-size:12.7px;color:#000;left:1280.00px;">$</div>
<div class="t " style="top:549px;height:24px;line-height:24px;font-size:12.7px;color:#000;right:568.30px;text-align:right;">1,350</div>
<div class="t " style="top:549px;height:24px;line-height:24px;font-size:12.7px;color:#000;left:1369.00px;">$</div>
<div class="t " style="top:549px;height:24px;line-height:24px;font-size:12.7px;color:#000;right:479.30px;text-align:right;">1,350</div>
<div class="t " style="top:549px;height:24px;line-height:24px;font-size:12.7px;color:#000;left:1458.00px;">$</div>
<div class="t " style="top:549px;height:24px;line-height:24px;font-size:12.7px;color:#000;right:390.30px;text-align:right;">1,350</div>
<div class="t " style="top:549px;height:24px;line-height:24px;font-size:12.7px;color:#000;left:1547.00px;">$</div>
<div class="t " style="top:549px;height:24px;line-height:24px;font-size:12.7px;color:#000;right:301.30px;text-align:right;">1,350</div>
<div class="t " style="top:549px;height:24px;line-height:24px;font-size:12.7px;color:#000;left:1636.00px;">$</div>
<div class="t " style="top:549px;height:24px;line-height:24px;font-size:12.7px;color:#000;right:212.30px;text-align:right;">1,350</div>
<div class="t " style="top:549px;height:24px;line-height:24px;font-size:12.7px;color:#000;left:1725.00px;">$</div>
<div class="t " style="top:549px;height:24px;line-height:24px;font-size:12.7px;color:#000;right:123.30px;text-align:right;">1,350</div>
<div class="t " style="top:549px;height:24px;line-height:24px;font-size:12.7px;color:#000;left:1814.00px;">$</div>
<div class="t " style="top:549px;height:24px;line-height:24px;font-size:12.7px;color:#000;right:34.30px;text-align:right;">1,350</div>
<div class="t " style="top:571px;height:24px;line-height:24px;font-size:12.7px;color:#000;left:924.00px;">$</div>
<div class="t " style="top:571px;height:24px;line-height:24px;font-size:12.7px;color:#000;right:924.30px;text-align:right;">1,150</div>
<div class="t " style="top:571px;height:24px;line-height:24px;font-size:12.7px;color:#000;left:1013.00px;">$</div>
<div class="t " style="top:571px;height:24px;line-height:24px;font-size:12.7px;color:#000;right:835.30px;text-align:right;">1,150</div>
<div class="t " style="top:571px;height:24px;line-height:24px;font-size:12.7px;color:#000;left:1102.00px;">$</div>
<div class="t " style="top:571px;height:24px;line-height:24px;font-size:12.7px;color:#000;right:746.30px;text-align:right;">1,150</div>
<div class="t " style="top:571px;height:24px;line-height:24px;font-size:12.7px;color:#000;left:1191.00px;">$</div>
<div class="t " style="top:571px;height:24px;line-height:24px;font-size:12.7px;color:#000;right:657.30px;text-align:right;">1,150</div>
<div class="t " style="top:571px;height:24px;line-height:24px;font-size:12.7px;color:#000;left:1280.00px;">$</div>
<div class="t " style="top:571px;height:24px;line-height:24px;font-size:12.7px;color:#000;right:568.30px;text-align:right;">1,150</div>
<div class="t " style="top:571px;height:24px;line-height:24px;font-size:12.7px;color:#000;left:1369.00px;">$</div>
<div class="t " style="top:571px;height:24px;line-height:24px;font-size:12.7px;color:#000;right:479.30px;text-align:right;">1,150</div>
<div class="t " style="top:571px;height:24px;line-height:24px;font-size:12.7px;color:#000;left:1458.00px;">$</div>
<div class="t " style="top:571px;height:24px;line-height:24px;font-size:12.7px;color:#000;right:390.30px;text-align:right;">1,150</div>
<div class="t " style="top:571px;height:24px;line-height:24px;font-size:12.7px;color:#000;left:1547.00px;">$</div>
<div class="t " style="top:571px;height:24px;line-height:24px;font-size:12.7px;color:#000;right:301.30px;text-align:right;">1,150</div>
<div class="t " style="top:571px;height:24px;line-height:24px;font-size:12.7px;color:#000;left:1636.00px;">$</div>
<div class="t " style="top:571px;height:24px;line-height:24px;font-size:12.7px;color:#000;right:212.30px;text-align:right;">1,150</div>
<div class="t " style="top:571px;height:24px;line-height:24px;font-size:12.7px;color:#000;left:1725.00px;">$</div>
<div class="t " style="top:571px;height:24px;line-height:24px;font-size:12.7px;color:#000;right:123.30px;text-align:right;">1,150</div>
<div class="t " style="top:571px;height:24px;line-height:24px;font-size:12.7px;color:#000;left:1814.00px;">$</div>
<div class="t " style="top:571px;height:24px;line-height:24px;font-size:12.7px;color:#000;right:34.30px;text-align:right;">1,150</div>
<div class="t " style="top:593px;height:24px;line-height:24px;font-size:12.7px;color:#000;left:924.00px;">$</div>
<div class="t " style="top:593px;height:24px;line-height:24px;font-size:12.7px;color:#000;right:924.30px;text-align:right;">1,300</div>
<div class="t " style="top:593px;height:24px;line-height:24px;font-size:12.7px;color:#000;left:1013.00px;">$</div>
<div class="t " style="top:593px;height:24px;line-height:24px;font-size:12.7px;color:#000;right:835.30px;text-align:right;">1,300</div>
<div class="t " style="top:593px;height:24px;line-height:24px;font-size:12.7px;color:#000;left:1102.00px;">$</div>
<div class="t " style="top:593px;height:24px;line-height:24px;font-size:12.7px;color:#000;right:746.30px;text-align:right;">1,300</div>
<div class="t " style="top:593px;height:24px;line-height:24px;font-size:12.7px;color:#000;left:1191.00px;">$</div>
<div class="t " style="top:593px;height:24px;line-height:24px;font-size:12.7px;color:#000;right:657.30px;text-align:right;">1,300</div>
<div class="t " style="top:593px;height:24px;line-height:24px;font-size:12.7px;color:#000;left:1280.00px;">$</div>
<div class="t " style="top:593px;height:24px;line-height:24px;font-size:12.7px;color:#000;right:568.30px;text-align:right;">1,300</div>
<div class="t " style="top:593px;height:24px;line-height:24px;font-size:12.7px;color:#000;left:1369.00px;">$</div>
<div class="t " style="top:593px;height:24px;line-height:24px;font-size:12.7px;color:#000;right:479.30px;text-align:right;">1,300</div>
<div class="t " style="top:593px;height:24px;line-height:24px;font-size:12.7px;color:#000;left:1458.00px;">$</div>
<div class="t " style="top:593px;height:24px;line-height:24px;font-size:12.7px;color:#000;right:390.30px;text-align:right;">1,300</div>
<div class="t " style="top:593px;height:24px;line-height:24px;font-size:12.7px;color:#000;left:1547.00px;">$</div>
<div class="t " style="top:593px;height:24px;line-height:24px;font-size:12.7px;color:#000;right:301.30px;text-align:right;">1,300</div>
<div class="t " style="top:593px;height:24px;line-height:24px;font-size:12.7px;color:#000;left:1636.00px;">$</div>
<div class="t " style="top:593px;height:24px;line-height:24px;font-size:12.7px;color:#000;right:212.30px;text-align:right;">1,300</div>
<div class="t " style="top:593px;height:24px;line-height:24px;font-size:12.7px;color:#000;left:1725.00px;">$</div>
<div class="t " style="top:593px;height:24px;line-height:24px;font-size:12.7px;color:#000;right:123.30px;text-align:right;">1,300</div>
<div class="t " style="top:593px;height:24px;line-height:24px;font-size:12.7px;color:#000;left:1814.00px;">$</div>
<div class="t " style="top:593px;height:24px;line-height:24px;font-size:12.7px;color:#000;right:34.30px;text-align:right;">1,300</div>
<div class="t " style="top:615px;height:24px;line-height:24px;font-size:12.7px;color:#000;left:924.00px;">$</div>
<div class="t " style="top:615px;height:24px;line-height:24px;font-size:12.7px;color:#000;right:924.30px;text-align:right;">2,100</div>
<div class="t " style="top:615px;height:24px;line-height:24px;font-size:12.7px;color:#000;left:1013.00px;">$</div>
<div class="t " style="top:615px;height:24px;line-height:24px;font-size:12.7px;color:#000;right:835.30px;text-align:right;">2,100</div>
<div class="t " style="top:615px;height:24px;line-height:24px;font-size:12.7px;color:#000;left:1102.00px;">$</div>
<div class="t " style="top:615px;height:24px;line-height:24px;font-size:12.7px;color:#000;right:746.30px;text-align:right;">2,100</div>
<div class="t " style="top:615px;height:24px;line-height:24px;font-size:12.7px;color:#000;left:1191.00px;">$</div>
<div class="t " style="top:615px;height:24px;line-height:24px;font-size:12.7px;color:#000;right:657.30px;text-align:right;">2,100</div>
<div class="t " style="top:615px;height:24px;line-height:24px;font-size:12.7px;color:#000;left:1280.00px;">$</div>
<div class="t " style="top:615px;height:24px;line-height:24px;font-size:12.7px;color:#000;right:568.30px;text-align:right;">2,100</div>
<div class="t " style="top:615px;height:24px;line-height:24px;font-size:12.7px;color:#000;left:1369.00px;">$</div>
<div class="t " style="top:615px;height:24px;line-height:24px;font-size:12.7px;color:#000;right:479.30px;text-align:right;">2,100</div>
<div class="t " style="top:615px;height:24px;line-height:24px;font-size:12.7px;color:#000;left:1458.00px;">$</div>
<div class="t " style="top:615px;height:24px;line-height:24px;font-size:12.7px;color:#000;right:390.30px;text-align:right;">2,100</div>
<div class="t " style="top:615px;height:24px;line-height:24px;font-size:12.7px;color:#000;left:1547.00px;">$</div>
<div class="t " style="top:615px;height:24px;line-height:24px;font-size:12.7px;color:#000;right:301.30px;text-align:right;">2,100</div>
<div class="t " style="top:615px;height:24px;line-height:24px;font-size:12.7px;color:#000;left:1636.00px;">$</div>
<div class="t " style="top:615px;height:24px;line-height:24px;font-size:12.7px;color:#000;right:212.30px;text-align:right;">2,100</div>
<div class="t " style="top:615px;height:24px;line-height:24px;font-size:12.7px;color:#000;left:1725.00px;">$</div>
<div class="t " style="top:615px;height:24px;line-height:24px;font-size:12.7px;color:#000;right:123.30px;text-align:right;">2,100</div>
<div class="t " style="top:615px;height:24px;line-height:24px;font-size:12.7px;color:#000;left:1814.00px;">$</div>
<div class="t " style="top:615px;height:24px;line-height:24px;font-size:12.7px;color:#000;right:34.30px;text-align:right;">2,100</div>
<div class="t " style="top:703px;height:24px;line-height:24px;font-size:12.7px;color:#000;left:924.00px;">$</div>
<div class="t " style="top:703px;height:24px;line-height:24px;font-size:12.7px;color:#000;right:924.30px;text-align:right;">6,000</div>
<div class="t " style="top:703px;height:24px;line-height:24px;font-size:12.7px;color:#000;left:1013.00px;">$</div>
<div class="t " style="top:703px;height:24px;line-height:24px;font-size:12.7px;color:#000;right:835.30px;text-align:right;">6,000</div>
<div class="t " style="top:703px;height:24px;line-height:24px;font-size:12.7px;color:#000;left:1102.00px;">$</div>
<div class="t " style="top:703px;height:24px;line-height:24px;font-size:12.7px;color:#000;right:746.30px;text-align:right;">6,000</div>
<div class="t " style="top:703px;height:24px;line-height:24px;font-size:12.7px;color:#000;left:1191.00px;">$</div>
<div class="t " style="top:703px;height:24px;line-height:24px;font-size:12.7px;color:#000;right:657.30px;text-align:right;">6,000</div>
<div class="t " style="top:703px;height:24px;line-height:24px;font-size:12.7px;color:#000;left:1280.00px;">$</div>
<div class="t " style="top:703px;height:24px;line-height:24px;font-size:12.7px;color:#000;right:568.30px;text-align:right;">6,000</div>
<div class="t " style="top:703px;height:24px;line-height:24px;font-size:12.7px;color:#000;left:1369.00px;">$</div>
<div class="t " style="top:703px;height:24px;line-height:24px;font-size:12.7px;color:#000;right:479.30px;text-align:right;">6,000</div>
<div class="t " style="top:703px;height:24px;line-height:24px;font-size:12.7px;color:#000;left:1458.00px;">$</div>
<div class="t " style="top:703px;height:24px;line-height:24px;font-size:12.7px;color:#000;right:390.30px;text-align:right;">6,000</div>
<div class="t " style="top:703px;height:24px;line-height:24px;font-size:12.7px;color:#000;left:1547.00px;">$</div>
<div class="t " style="top:703px;height:24px;line-height:24px;font-size:12.7px;color:#000;right:301.30px;text-align:right;">6,000</div>
<div class="t " style="top:703px;height:24px;line-height:24px;font-size:12.7px;color:#000;left:1636.00px;">$</div>
<div class="t " style="top:703px;height:24px;line-height:24px;font-size:12.7px;color:#000;right:212.30px;text-align:right;">6,000</div>
<div class="t " style="top:703px;height:24px;line-height:24px;font-size:12.7px;color:#000;left:1725.00px;">$</div>
<div class="t " style="top:703px;height:24px;line-height:24px;font-size:12.7px;color:#000;right:123.30px;text-align:right;">6,000</div>
<div class="t " style="top:703px;height:24px;line-height:24px;font-size:12.7px;color:#000;left:1814.00px;">$</div>
<div class="t " style="top:703px;height:24px;line-height:24px;font-size:12.7px;color:#000;right:34.30px;text-align:right;">6,000</div>
<div class="t " style="top:417px;height:24px;line-height:24px;font-size:12.7px;color:#000;left:924.00px;">$</div>
<div class="t " style="top:417px;height:24px;line-height:24px;font-size:12.7px;color:#000;right:924.30px;text-align:right;">3,500</div>
<div class="t " style="top:417px;height:24px;line-height:24px;font-size:12.7px;color:#000;left:1013.00px;">$</div>
<div class="t " style="top:417px;height:24px;line-height:24px;font-size:12.7px;color:#000;right:835.30px;text-align:right;">3,500</div>
<div class="t " style="top:417px;height:24px;line-height:24px;font-size:12.7px;color:#000;left:1102.00px;">$</div>
<div class="t " style="top:417px;height:24px;line-height:24px;font-size:12.7px;color:#000;right:746.30px;text-align:right;">3,500</div>
<div class="t " style="top:417px;height:24px;line-height:24px;font-size:12.7px;color:#000;left:1191.00px;">$</div>
<div class="t " style="top:417px;height:24px;line-height:24px;font-size:12.7px;color:#000;right:657.30px;text-align:right;">3,500</div>
<div class="t " style="top:417px;height:24px;line-height:24px;font-size:12.7px;color:#000;left:1280.00px;">$</div>
<div class="t " style="top:417px;height:24px;line-height:24px;font-size:12.7px;color:#000;right:568.30px;text-align:right;">3,500</div>
<div class="t " style="top:417px;height:24px;line-height:24px;font-size:12.7px;color:#000;left:1369.00px;">$</div>
<div class="t " style="top:417px;height:24px;line-height:24px;font-size:12.7px;color:#000;right:479.30px;text-align:right;">3,500</div>
<div class="t " style="top:417px;height:24px;line-height:24px;font-size:12.7px;color:#000;left:1458.00px;">$</div>
<div class="t " style="top:417px;height:24px;line-height:24px;font-size:12.7px;color:#000;right:390.30px;text-align:right;">3,500</div>
<div class="t " style="top:417px;height:24px;line-height:24px;font-size:12.7px;color:#000;left:1547.00px;">$</div>
<div class="t " style="top:417px;height:24px;line-height:24px;font-size:12.7px;color:#000;right:301.30px;text-align:right;">3,500</div>
<div class="t " style="top:417px;height:24px;line-height:24px;font-size:12.7px;color:#000;left:1636.00px;">$</div>
<div class="t " style="top:417px;height:24px;line-height:24px;font-size:12.7px;color:#000;right:212.30px;text-align:right;">3,500</div>
<div class="t " style="top:417px;height:24px;line-height:24px;font-size:12.7px;color:#000;left:1725.00px;">$</div>
<div class="t " style="top:417px;height:24px;line-height:24px;font-size:12.7px;color:#000;right:123.30px;text-align:right;">3,500</div>
<div class="t " style="top:417px;height:24px;line-height:24px;font-size:12.7px;color:#000;left:1814.00px;">$</div>
<div class="t " style="top:417px;height:24px;line-height:24px;font-size:12.7px;color:#000;right:34.30px;text-align:right;">3,500</div>
<div class="t " style="top:439px;height:24px;line-height:24px;font-size:12.7px;color:#000;left:924.00px;">$</div>
<div class="t " style="top:439px;height:24px;line-height:24px;font-size:12.7px;color:#000;right:924.30px;text-align:right;">3,500</div>
<div class="t " style="top:439px;height:24px;line-height:24px;font-size:12.7px;color:#000;left:1013.00px;">$</div>
<div class="t " style="top:439px;height:24px;line-height:24px;font-size:12.7px;color:#000;right:835.30px;text-align:right;">3,500</div>
<div class="t " style="top:439px;height:24px;line-height:24px;font-size:12.7px;color:#000;left:1102.00px;">$</div>
<div class="t " style="top:439px;height:24px;line-height:24px;font-size:12.7px;color:#000;right:746.30px;text-align:right;">3,500</div>
<div class="t " style="top:439px;height:24px;line-height:24px;font-size:12.7px;color:#000;left:1191.00px;">$</div>
<div class="t " style="top:439px;height:24px;line-height:24px;font-size:12.7px;color:#000;right:657.30px;text-align:right;">3,500</div>
<div class="t " style="top:439px;height:24px;line-height:24px;font-size:12.7px;color:#000;left:1280.00px;">$</div>
<div class="t " style="top:439px;height:24px;line-height:24px;font-size:12.7px;color:#000;right:568.30px;text-align:right;">3,500</div>
<div class="t " style="top:439px;height:24px;line-height:24px;font-size:12.7px;color:#000;left:1369.00px;">$</div>
<div class="t " style="top:439px;height:24px;line-height:24px;font-size:12.7px;color:#000;right:479.30px;text-align:right;">3,500</div>
<div class="t " style="top:439px;height:24px;line-height:24px;font-size:12.7px;color:#000;left:1458.00px;">$</div>
<div class="t " style="top:439px;height:24px;line-height:24px;font-size:12.7px;color:#000;right:390.30px;text-align:right;">3,500</div>
<div class="t " style="top:439px;height:24px;line-height:24px;font-size:12.7px;color:#000;left:1547.00px;">$</div>
<div class="t " style="top:439px;height:24px;line-height:24px;font-size:12.7px;color:#000;right:301.30px;text-align:right;">3,500</div>
<div class="t " style="top:439px;height:24px;line-height:24px;font-size:12.7px;color:#000;left:1636.00px;">$</div>
<div class="t " style="top:439px;height:24px;line-height:24px;font-size:12.7px;color:#000;right:212.30px;text-align:right;">3,500</div>
<div class="t " style="top:439px;height:24px;line-height:24px;font-size:12.7px;color:#000;left:1725.00px;">$</div>
<div class="t " style="top:439px;height:24px;line-height:24px;font-size:12.7px;color:#000;right:123.30px;text-align:right;">3,500</div>
<div class="t " style="top:439px;height:24px;line-height:24px;font-size:12.7px;color:#000;left:1814.00px;">$</div>
<div class="t " style="top:439px;height:24px;line-height:24px;font-size:12.7px;color:#000;right:34.30px;text-align:right;">3,500</div>
<div class="t " style="top:461px;height:24px;line-height:24px;font-size:12.7px;color:#000;left:924.00px;">$</div>
<div class="t " style="top:461px;height:24px;line-height:24px;font-size:12.7px;color:#000;right:924.30px;text-align:right;">3,500</div>
<div class="t " style="top:461px;height:24px;line-height:24px;font-size:12.7px;color:#000;left:1013.00px;">$</div>
<div class="t " style="top:461px;height:24px;line-height:24px;font-size:12.7px;color:#000;right:835.30px;text-align:right;">3,500</div>
<div class="t " style="top:461px;height:24px;line-height:24px;font-size:12.7px;color:#000;left:1102.00px;">$</div>
<div class="t " style="top:461px;height:24px;line-height:24px;font-size:12.7px;color:#000;right:746.30px;text-align:right;">3,500</div>
<div class="t " style="top:461px;height:24px;line-height:24px;font-size:12.7px;color:#000;left:1191.00px;">$</div>
<div class="t " style="top:461px;height:24px;line-height:24px;font-size:12.7px;color:#000;right:657.30px;text-align:right;">3,500</div>
<div class="t " style="top:461px;height:24px;line-height:24px;font-size:12.7px;color:#000;left:1280.00px;">$</div>
<div class="t " style="top:461px;height:24px;line-height:24px;font-size:12.7px;color:#000;right:568.30px;text-align:right;">3,500</div>
<div class="t " style="top:461px;height:24px;line-height:24px;font-size:12.7px;color:#000;left:1369.00px;">$</div>
<div class="t " style="top:461px;height:24px;line-height:24px;font-size:12.7px;color:#000;right:479.30px;text-align:right;">3,500</div>
<div class="t " style="top:461px;height:24px;line-height:24px;font-size:12.7px;color:#000;left:1458.00px;">$</div>
<div class="t " style="top:461px;height:24px;line-height:24px;font-size:12.7px;color:#000;right:390.30px;text-align:right;">3,500</div>
<div class="t " style="top:461px;height:24px;line-height:24px;font-size:12.7px;color:#000;left:1547.00px;">$</div>
<div class="t " style="top:461px;height:24px;line-height:24px;font-size:12.7px;color:#000;right:301.30px;text-align:right;">3,500</div>
<div class="t " style="top:461px;height:24px;line-height:24px;font-size:12.7px;color:#000;left:1636.00px;">$</div>
<div class="t " style="top:461px;height:24px;line-height:24px;font-size:12.7px;color:#000;right:212.30px;text-align:right;">3,500</div>
<div class="t " style="top:461px;height:24px;line-height:24px;font-size:12.7px;color:#000;left:1725.00px;">$</div>
<div class="t " style="top:461px;height:24px;line-height:24px;font-size:12.7px;color:#000;right:123.30px;text-align:right;">3,500</div>
<div class="t " style="top:461px;height:24px;line-height:24px;font-size:12.7px;color:#000;left:1814.00px;">$</div>
<div class="t " style="top:461px;height:24px;line-height:24px;font-size:12.7px;color:#000;right:34.30px;text-align:right;">3,500</div>
<div class="t " style="top:483px;height:24px;line-height:24px;font-size:12.7px;color:#000;left:924.00px;">$</div>
<div class="t " style="top:483px;height:24px;line-height:24px;font-size:12.7px;color:#000;right:924.30px;text-align:right;">3,500</div>
<div class="t " style="top:483px;height:24px;line-height:24px;font-size:12.7px;color:#000;left:1013.00px;">$</div>
<div class="t " style="top:483px;height:24px;line-height:24px;font-size:12.7px;color:#000;right:835.30px;text-align:right;">3,500</div>
<div class="t " style="top:483px;height:24px;line-height:24px;font-size:12.7px;color:#000;left:1102.00px;">$</div>
<div class="t " style="top:483px;height:24px;line-height:24px;font-size:12.7px;color:#000;right:746.30px;text-align:right;">3,500</div>
<div class="t " style="top:483px;height:24px;line-height:24px;font-size:12.7px;color:#000;left:1191.00px;">$</div>
<div class="t " style="top:483px;height:24px;line-height:24px;font-size:12.7px;color:#000;right:657.30px;text-align:right;">3,500</div>
<div class="t " style="top:483px;height:24px;line-height:24px;font-size:12.7px;color:#000;left:1280.00px;">$</div>
<div class="t " style="top:483px;height:24px;line-height:24px;font-size:12.7px;color:#000;right:568.30px;text-align:right;">3,500</div>
<div class="t " style="top:483px;height:24px;line-height:24px;font-size:12.7px;color:#000;left:1369.00px;">$</div>
<div class="t " style="top:483px;height:24px;line-height:24px;font-size:12.7px;color:#000;right:479.30px;text-align:right;">3,500</div>
<div class="t " style="top:483px;height:24px;line-height:24px;font-size:12.7px;color:#000;left:1458.00px;">$</div>
<div class="t " style="top:483px;height:24px;line-height:24px;font-size:12.7px;color:#000;right:390.30px;text-align:right;">3,500</div>
<div class="t " style="top:483px;height:24px;line-height:24px;font-size:12.7px;color:#000;left:1547.00px;">$</div>
<div class="t " style="top:483px;height:24px;line-height:24px;font-size:12.7px;color:#000;right:301.30px;text-align:right;">3,500</div>
<div class="t " style="top:483px;height:24px;line-height:24px;font-size:12.7px;color:#000;left:1636.00px;">$</div>
<div class="t " style="top:483px;height:24px;line-height:24px;font-size:12.7px;color:#000;right:212.30px;text-align:right;">3,500</div>
<div class="t " style="top:483px;height:24px;line-height:24px;font-size:12.7px;color:#000;left:1725.00px;">$</div>
<div class="t " style="top:483px;height:24px;line-height:24px;font-size:12.7px;color:#000;right:123.30px;text-align:right;">3,500</div>
<div class="t " style="top:483px;height:24px;line-height:24px;font-size:12.7px;color:#000;left:1814.00px;">$</div>
<div class="t " style="top:483px;height:24px;line-height:24px;font-size:12.7px;color:#000;right:34.30px;text-align:right;">3,500</div>
<div class="t " style="top:505px;height:24px;line-height:24px;font-size:12.7px;color:#000;left:924.00px;">$</div>
<div class="t " style="top:505px;height:24px;line-height:24px;font-size:12.7px;color:#000;right:924.30px;text-align:right;">3,500</div>
<div class="t " style="top:505px;height:24px;line-height:24px;font-size:12.7px;color:#000;left:1013.00px;">$</div>
<div class="t " style="top:505px;height:24px;line-height:24px;font-size:12.7px;color:#000;right:835.30px;text-align:right;">3,500</div>
<div class="t " style="top:505px;height:24px;line-height:24px;font-size:12.7px;color:#000;left:1102.00px;">$</div>
<div class="t " style="top:505px;height:24px;line-height:24px;font-size:12.7px;color:#000;right:746.30px;text-align:right;">3,500</div>
<div class="t " style="top:505px;height:24px;line-height:24px;font-size:12.7px;color:#000;left:1191.00px;">$</div>
<div class="t " style="top:505px;height:24px;line-height:24px;font-size:12.7px;color:#000;right:657.30px;text-align:right;">3,500</div>
<div class="t " style="top:505px;height:24px;line-height:24px;font-size:12.7px;color:#000;left:1280.00px;">$</div>
<div class="t " style="top:505px;height:24px;line-height:24px;font-size:12.7px;color:#000;right:568.30px;text-align:right;">3,500</div>
<div class="t " style="top:505px;height:24px;line-height:24px;font-size:12.7px;color:#000;left:1369.00px;">$</div>
<div class="t " style="top:505px;height:24px;line-height:24px;font-size:12.7px;color:#000;right:479.30px;text-align:right;">3,500</div>
<div class="t " style="top:505px;height:24px;line-height:24px;font-size:12.7px;color:#000;left:1458.00px;">$</div>
<div class="t " style="top:505px;height:24px;line-height:24px;font-size:12.7px;color:#000;right:390.30px;text-align:right;">3,500</div>
<div class="t " style="top:505px;height:24px;line-height:24px;font-size:12.7px;color:#000;left:1547.00px;">$</div>
<div class="t " style="top:505px;height:24px;line-height:24px;font-size:12.7px;color:#000;right:301.30px;text-align:right;">3,500</div>
<div class="t " style="top:505px;height:24px;line-height:24px;font-size:12.7px;color:#000;left:1636.00px;">$</div>
<div class="t " style="top:505px;height:24px;line-height:24px;font-size:12.7px;color:#000;right:212.30px;text-align:right;">3,500</div>
<div class="t " style="top:505px;height:24px;line-height:24px;font-size:12.7px;color:#000;left:1725.00px;">$</div>
<div class="t " style="top:505px;height:24px;line-height:24px;font-size:12.7px;color:#000;right:123.30px;text-align:right;">3,500</div>
<div class="t " style="top:505px;height:24px;line-height:24px;font-size:12.7px;color:#000;left:1814.00px;">$</div>
<div class="t " style="top:505px;height:24px;line-height:24px;font-size:12.7px;color:#000;right:34.30px;text-align:right;">3,500</div>
<div class="t " style="top:725px;height:24px;line-height:24px;font-size:12.7px;color:#000;left:924.00px;">$</div>
<div class="t " style="top:725px;height:24px;line-height:24px;font-size:12.7px;color:#000;right:924.30px;text-align:right;">3,500</div>
<div class="t " style="top:725px;height:24px;line-height:24px;font-size:12.7px;color:#000;left:1013.00px;">$</div>
<div class="t " style="top:725px;height:24px;line-height:24px;font-size:12.7px;color:#000;right:835.30px;text-align:right;">3,500</div>
<div class="t " style="top:725px;height:24px;line-height:24px;font-size:12.7px;color:#000;left:1102.00px;">$</div>
<div class="t " style="top:725px;height:24px;line-height:24px;font-size:12.7px;color:#000;right:746.30px;text-align:right;">3,500</div>
<div class="t " style="top:725px;height:24px;line-height:24px;font-size:12.7px;color:#000;left:1191.00px;">$</div>
<div class="t " style="top:725px;height:24px;line-height:24px;font-size:12.7px;color:#000;right:657.30px;text-align:right;">3,500</div>
<div class="t " style="top:725px;height:24px;line-height:24px;font-size:12.7px;color:#000;left:1280.00px;">$</div>
<div class="t " style="top:725px;height:24px;line-height:24px;font-size:12.7px;color:#000;right:568.30px;text-align:right;">3,500</div>
<div class="t " style="top:725px;height:24px;line-height:24px;font-size:12.7px;color:#000;left:1369.00px;">$</div>
<div class="t " style="top:725px;height:24px;line-height:24px;font-size:12.7px;color:#000;right:479.30px;text-align:right;">3,500</div>
<div class="t " style="top:725px;height:24px;line-height:24px;font-size:12.7px;color:#000;left:1458.00px;">$</div>
<div class="t " style="top:725px;height:24px;line-height:24px;font-size:12.7px;color:#000;right:390.30px;text-align:right;">3,500</div>
<div class="t " style="top:725px;height:24px;line-height:24px;font-size:12.7px;color:#000;left:1547.00px;">$</div>
<div class="t " style="top:725px;height:24px;line-height:24px;font-size:12.7px;color:#000;right:301.30px;text-align:right;">3,500</div>
<div class="t " style="top:725px;height:24px;line-height:24px;font-size:12.7px;color:#000;left:1636.00px;">$</div>
<div class="t " style="top:725px;height:24px;line-height:24px;font-size:12.7px;color:#000;right:212.30px;text-align:right;">3,500</div>
<div class="t " style="top:725px;height:24px;line-height:24px;font-size:12.7px;color:#000;left:1725.00px;">$</div>
<div class="t " style="top:725px;height:24px;line-height:24px;font-size:12.7px;color:#000;right:123.30px;text-align:right;">3,500</div>
<div class="t " style="top:725px;height:24px;line-height:24px;font-size:12.7px;color:#000;left:1814.00px;">$</div>
<div class="t " style="top:725px;height:24px;line-height:24px;font-size:12.7px;color:#000;right:34.30px;text-align:right;">3,500</div>
<div class="t " style="top:747px;height:24px;line-height:24px;font-size:12.7px;color:#000;left:924.00px;">$</div>
<div class="t " style="top:747px;height:24px;line-height:24px;font-size:12.7px;color:#000;right:924.30px;text-align:right;">3,500</div>
<div class="t " style="top:747px;height:24px;line-height:24px;font-size:12.7px;color:#000;left:1013.00px;">$</div>
<div class="t " style="top:747px;height:24px;line-height:24px;font-size:12.7px;color:#000;right:835.30px;text-align:right;">3,500</div>
<div class="t " style="top:747px;height:24px;line-height:24px;font-size:12.7px;color:#000;left:1102.00px;">$</div>
<div class="t " style="top:747px;height:24px;line-height:24px;font-size:12.7px;color:#000;right:746.30px;text-align:right;">3,500</div>
<div class="t " style="top:747px;height:24px;line-height:24px;font-size:12.7px;color:#000;left:1191.00px;">$</div>
<div class="t " style="top:747px;height:24px;line-height:24px;font-size:12.7px;color:#000;right:657.30px;text-align:right;">3,500</div>
<div class="t " style="top:747px;height:24px;line-height:24px;font-size:12.7px;color:#000;left:1280.00px;">$</div>
<div class="t " style="top:747px;height:24px;line-height:24px;font-size:12.7px;color:#000;right:568.30px;text-align:right;">3,500</div>
<div class="t " style="top:747px;height:24px;line-height:24px;font-size:12.7px;color:#000;left:1369.00px;">$</div>
<div class="t " style="top:747px;height:24px;line-height:24px;font-size:12.7px;color:#000;right:479.30px;text-align:right;">3,500</div>
<div class="t " style="top:747px;height:24px;line-height:24px;font-size:12.7px;color:#000;left:1458.00px;">$</div>
<div class="t " style="top:747px;height:24px;line-height:24px;font-size:12.7px;color:#000;right:390.30px;text-align:right;">3,500</div>
<div class="t " style="top:747px;height:24px;line-height:24px;font-size:12.7px;color:#000;left:1547.00px;">$</div>
<div class="t " style="top:747px;height:24px;line-height:24px;font-size:12.7px;color:#000;right:301.30px;text-align:right;">3,500</div>
<div class="t " style="top:747px;height:24px;line-height:24px;font-size:12.7px;color:#000;left:1636.00px;">$</div>
<div class="t " style="top:747px;height:24px;line-height:24px;font-size:12.7px;color:#000;right:212.30px;text-align:right;">3,500</div>
<div class="t " style="top:747px;height:24px;line-height:24px;font-size:12.7px;color:#000;left:1725.00px;">$</div>
<div class="t " style="top:747px;height:24px;line-height:24px;font-size:12.7px;color:#000;right:123.30px;text-align:right;">3,500</div>
<div class="t " style="top:747px;height:24px;line-height:24px;font-size:12.7px;color:#000;left:1814.00px;">$</div>
<div class="t " style="top:747px;height:24px;line-height:24px;font-size:12.7px;color:#000;right:34.30px;text-align:right;">3,500</div>
<div class="t " style="top:769px;height:24px;line-height:24px;font-size:12.7px;color:#000;left:924.00px;">$</div>
<div class="t " style="top:769px;height:24px;line-height:24px;font-size:12.7px;color:#000;right:924.30px;text-align:right;">3,500</div>
<div class="t " style="top:769px;height:24px;line-height:24px;font-size:12.7px;color:#000;left:1013.00px;">$</div>
<div class="t " style="top:769px;height:24px;line-height:24px;font-size:12.7px;color:#000;right:835.30px;text-align:right;">3,500</div>
<div class="t " style="top:769px;height:24px;line-height:24px;font-size:12.7px;color:#000;left:1102.00px;">$</div>
<div class="t " style="top:769px;height:24px;line-height:24px;font-size:12.7px;color:#000;right:746.30px;text-align:right;">3,500</div>
<div class="t " style="top:769px;height:24px;line-height:24px;font-size:12.7px;color:#000;left:1191.00px;">$</div>
<div class="t " style="top:769px;height:24px;line-height:24px;font-size:12.7px;color:#000;right:657.30px;text-align:right;">3,500</div>
<div class="t " style="top:769px;height:24px;line-height:24px;font-size:12.7px;color:#000;left:1280.00px;">$</div>
<div class="t " style="top:769px;height:24px;line-height:24px;font-size:12.7px;color:#000;right:568.30px;text-align:right;">3,500</div>
<div class="t " style="top:769px;height:24px;line-height:24px;font-size:12.7px;color:#000;left:1369.00px;">$</div>
<div class="t " style="top:769px;height:24px;line-height:24px;font-size:12.7px;color:#000;right:479.30px;text-align:right;">3,500</div>
<div class="t " style="top:769px;height:24px;line-height:24px;font-size:12.7px;color:#000;left:1458.00px;">$</div>
<div class="t " style="top:769px;height:24px;line-height:24px;font-size:12.7px;color:#000;right:390.30px;text-align:right;">3,500</div>
<div class="t " style="top:769px;height:24px;line-height:24px;font-size:12.7px;color:#000;left:1547.00px;">$</div>
<div class="t " style="top:769px;height:24px;line-height:24px;font-size:12.7px;color:#000;right:301.30px;text-align:right;">3,500</div>
<div class="t " style="top:769px;height:24px;line-height:24px;font-size:12.7px;color:#000;left:1636.00px;">$</div>
<div class="t " style="top:769px;height:24px;line-height:24px;font-size:12.7px;color:#000;right:212.30px;text-align:right;">3,500</div>
<div class="t " style="top:769px;height:24px;line-height:24px;font-size:12.7px;color:#000;left:1725.00px;">$</div>
<div class="t " style="top:769px;height:24px;line-height:24px;font-size:12.7px;color:#000;right:123.30px;text-align:right;">3,500</div>
<div class="t " style="top:769px;height:24px;line-height:24px;font-size:12.7px;color:#000;left:1814.00px;">$</div>
<div class="t " style="top:769px;height:24px;line-height:24px;font-size:12.7px;color:#000;right:34.30px;text-align:right;">3,500</div>
<div class="t " style="top:791px;height:24px;line-height:24px;font-size:12.7px;color:#000;left:924.00px;">$</div>
<div class="t " style="top:791px;height:24px;line-height:24px;font-size:12.7px;color:#000;right:924.30px;text-align:right;">3,500</div>
<div class="t " style="top:791px;height:24px;line-height:24px;font-size:12.7px;color:#000;left:1013.00px;">$</div>
<div class="t " style="top:791px;height:24px;line-height:24px;font-size:12.7px;color:#000;right:835.30px;text-align:right;">3,500</div>
<div class="t " style="top:791px;height:24px;line-height:24px;font-size:12.7px;color:#000;left:1102.00px;">$</div>
<div class="t " style="top:791px;height:24px;line-height:24px;font-size:12.7px;color:#000;right:746.30px;text-align:right;">3,500</div>
<div class="t " style="top:791px;height:24px;line-height:24px;font-size:12.7px;color:#000;left:1191.00px;">$</div>
<div class="t " style="top:791px;height:24px;line-height:24px;font-size:12.7px;color:#000;right:657.30px;text-align:right;">3,500</div>
<div class="t " style="top:791px;height:24px;line-height:24px;font-size:12.7px;color:#000;left:1280.00px;">$</div>
<div class="t " style="top:791px;height:24px;line-height:24px;font-size:12.7px;color:#000;right:568.30px;text-align:right;">3,500</div>
<div class="t " style="top:791px;height:24px;line-height:24px;font-size:12.7px;color:#000;left:1369.00px;">$</div>
<div class="t " style="top:791px;height:24px;line-height:24px;font-size:12.7px;color:#000;right:479.30px;text-align:right;">3,500</div>
<div class="t " style="top:791px;height:24px;line-height:24px;font-size:12.7px;color:#000;left:1458.00px;">$</div>
<div class="t " style="top:791px;height:24px;line-height:24px;font-size:12.7px;color:#000;right:390.30px;text-align:right;">3,500</div>
<div class="t " style="top:791px;height:24px;line-height:24px;font-size:12.7px;color:#000;left:1547.00px;">$</div>
<div class="t " style="top:791px;height:24px;line-height:24px;font-size:12.7px;color:#000;right:301.30px;text-align:right;">3,500</div>
<div class="t " style="top:791px;height:24px;line-height:24px;font-size:12.7px;color:#000;left:1636.00px;">$</div>
<div class="t " style="top:791px;height:24px;line-height:24px;font-size:12.7px;color:#000;right:212.30px;text-align:right;">3,500</div>
<div class="t " style="top:791px;height:24px;line-height:24px;font-size:12.7px;color:#000;left:1725.00px;">$</div>
<div class="t " style="top:791px;height:24px;line-height:24px;font-size:12.7px;color:#000;right:123.30px;text-align:right;">3,500</div>
<div class="t " style="top:791px;height:24px;line-height:24px;font-size:12.7px;color:#000;left:1814.00px;">$</div>
<div class="t " style="top:791px;height:24px;line-height:24px;font-size:12.7px;color:#000;right:34.30px;text-align:right;">3,500</div>
<div class="t " style="top:813px;height:24px;line-height:24px;font-size:12.7px;color:#000;left:924.00px;">$</div>
<div class="t " style="top:813px;height:24px;line-height:24px;font-size:12.7px;color:#000;right:924.30px;text-align:right;">3,500</div>
<div class="t " style="top:813px;height:24px;line-height:24px;font-size:12.7px;color:#000;left:1013.00px;">$</div>
<div class="t " style="top:813px;height:24px;line-height:24px;font-size:12.7px;color:#000;right:835.30px;text-align:right;">3,500</div>
<div class="t " style="top:813px;height:24px;line-height:24px;font-size:12.7px;color:#000;left:1102.00px;">$</div>
<div class="t " style="top:813px;height:24px;line-height:24px;font-size:12.7px;color:#000;right:746.30px;text-align:right;">3,500</div>
<div class="t " style="top:813px;height:24px;line-height:24px;font-size:12.7px;color:#000;left:1191.00px;">$</div>
<div class="t " style="top:813px;height:24px;line-height:24px;font-size:12.7px;color:#000;right:657.30px;text-align:right;">3,500</div>
<div class="t " style="top:813px;height:24px;line-height:24px;font-size:12.7px;color:#000;left:1280.00px;">$</div>
<div class="t " style="top:813px;height:24px;line-height:24px;font-size:12.7px;color:#000;right:568.30px;text-align:right;">3,500</div>
<div class="t " style="top:813px;height:24px;line-height:24px;font-size:12.7px;color:#000;left:1369.00px;">$</div>
<div class="t " style="top:813px;height:24px;line-height:24px;font-size:12.7px;color:#000;right:479.30px;text-align:right;">3,500</div>
<div class="t " style="top:813px;height:24px;line-height:24px;font-size:12.7px;color:#000;left:1458.00px;">$</div>
<div class="t " style="top:813px;height:24px;line-height:24px;font-size:12.7px;color:#000;right:390.30px;text-align:right;">3,500</div>
<div class="t " style="top:813px;height:24px;line-height:24px;font-size:12.7px;color:#000;left:1547.00px;">$</div>
<div class="t " style="top:813px;height:24px;line-height:24px;font-size:12.7px;color:#000;right:301.30px;text-align:right;">3,500</div>
<div class="t " style="top:813px;height:24px;line-height:24px;font-size:12.7px;color:#000;left:1636.00px;">$</div>
<div class="t " style="top:813px;height:24px;line-height:24px;font-size:12.7px;color:#000;right:212.30px;text-align:right;">3,500</div>
<div class="t " style="top:813px;height:24px;line-height:24px;font-size:12.7px;color:#000;left:1725.00px;">$</div>
<div class="t " style="top:813px;height:24px;line-height:24px;font-size:12.7px;color:#000;right:123.30px;text-align:right;">3,500</div>
<div class="t " style="top:813px;height:24px;line-height:24px;font-size:12.7px;color:#000;left:1814.00px;">$</div>
<div class="t " style="top:813px;height:24px;line-height:24px;font-size:12.7px;color:#000;right:34.30px;text-align:right;">3,500</div>
<div class="t " style="top:835px;height:24px;line-height:24px;font-size:12.7px;color:#000;left:924.00px;">$</div>
<div class="t " style="top:835px;height:24px;line-height:24px;font-size:12.7px;color:#000;right:924.30px;text-align:right;">3,500</div>
<div class="t " style="top:835px;height:24px;line-height:24px;font-size:12.7px;color:#000;left:1013.00px;">$</div>
<div class="t " style="top:835px;height:24px;line-height:24px;font-size:12.7px;color:#000;right:835.30px;text-align:right;">3,500</div>
<div class="t " style="top:835px;height:24px;line-height:24px;font-size:12.7px;color:#000;left:1102.00px;">$</div>
<div class="t " style="top:835px;height:24px;line-height:24px;font-size:12.7px;color:#000;right:746.30px;text-align:right;">3,500</div>
<div class="t " style="top:835px;height:24px;line-height:24px;font-size:12.7px;color:#000;left:1191.00px;">$</div>
<div class="t " style="top:835px;height:24px;line-height:24px;font-size:12.7px;color:#000;right:657.30px;text-align:right;">3,500</div>
<div class="t " style="top:835px;height:24px;line-height:24px;font-size:12.7px;color:#000;left:1280.00px;">$</div>
<div class="t " style="top:835px;height:24px;line-height:24px;font-size:12.7px;color:#000;right:568.30px;text-align:right;">3,500</div>
<div class="t " style="top:835px;height:24px;line-height:24px;font-size:12.7px;color:#000;left:1369.00px;">$</div>
<div class="t " style="top:835px;height:24px;line-height:24px;font-size:12.7px;color:#000;right:479.30px;text-align:right;">3,500</div>
<div class="t " style="top:835px;height:24px;line-height:24px;font-size:12.7px;color:#000;left:1458.00px;">$</div>
<div class="t " style="top:835px;height:24px;line-height:24px;font-size:12.7px;color:#000;right:390.30px;text-align:right;">3,500</div>
<div class="t " style="top:835px;height:24px;line-height:24px;font-size:12.7px;color:#000;left:1547.00px;">$</div>
<div class="t " style="top:835px;height:24px;line-height:24px;font-size:12.7px;color:#000;right:301.30px;text-align:right;">3,500</div>
<div class="t " style="top:835px;height:24px;line-height:24px;font-size:12.7px;color:#000;left:1636.00px;">$</div>
<div class="t " style="top:835px;height:24px;line-height:24px;font-size:12.7px;color:#000;right:212.30px;text-align:right;">3,500</div>
<div class="t " style="top:835px;height:24px;line-height:24px;font-size:12.7px;color:#000;left:1725.00px;">$</div>
<div class="t " style="top:835px;height:24px;line-height:24px;font-size:12.7px;color:#000;right:123.30px;text-align:right;">3,500</div>
<div class="t " style="top:835px;height:24px;line-height:24px;font-size:12.7px;color:#000;left:1814.00px;">$</div>
<div class="t " style="top:835px;height:24px;line-height:24px;font-size:12.7px;color:#000;right:34.30px;text-align:right;">3,500</div>
<div class="t " style="top:857px;height:24px;line-height:24px;font-size:12.7px;color:#000;left:924.00px;">$</div>
<div class="t " style="top:857px;height:24px;line-height:24px;font-size:12.7px;color:#000;right:924.30px;text-align:right;">3,500</div>
<div class="t " style="top:857px;height:24px;line-height:24px;font-size:12.7px;color:#000;left:1013.00px;">$</div>
<div class="t " style="top:857px;height:24px;line-height:24px;font-size:12.7px;color:#000;right:835.30px;text-align:right;">3,500</div>
<div class="t " style="top:857px;height:24px;line-height:24px;font-size:12.7px;color:#000;left:1102.00px;">$</div>
<div class="t " style="top:857px;height:24px;line-height:24px;font-size:12.7px;color:#000;right:746.30px;text-align:right;">3,500</div>
<div class="t " style="top:857px;height:24px;line-height:24px;font-size:12.7px;color:#000;left:1191.00px;">$</div>
<div class="t " style="top:857px;height:24px;line-height:24px;font-size:12.7px;color:#000;right:657.30px;text-align:right;">3,500</div>
<div class="t " style="top:857px;height:24px;line-height:24px;font-size:12.7px;color:#000;left:1280.00px;">$</div>
<div class="t " style="top:857px;height:24px;line-height:24px;font-size:12.7px;color:#000;right:568.30px;text-align:right;">3,500</div>
<div class="t " style="top:857px;height:24px;line-height:24px;font-size:12.7px;color:#000;left:1369.00px;">$</div>
<div class="t " style="top:857px;height:24px;line-height:24px;font-size:12.7px;color:#000;right:479.30px;text-align:right;">3,500</div>
<div class="t " style="top:857px;height:24px;line-height:24px;font-size:12.7px;color:#000;left:1458.00px;">$</div>
<div class="t " style="top:857px;height:24px;line-height:24px;font-size:12.7px;color:#000;right:390.30px;text-align:right;">3,500</div>
<div class="t " style="top:857px;height:24px;line-height:24px;font-size:12.7px;color:#000;left:1547.00px;">$</div>
<div class="t " style="top:857px;height:24px;line-height:24px;font-size:12.7px;color:#000;right:301.30px;text-align:right;">3,500</div>
<div class="t " style="top:857px;height:24px;line-height:24px;font-size:12.7px;color:#000;left:1636.00px;">$</div>
<div class="t " style="top:857px;height:24px;line-height:24px;font-size:12.7px;color:#000;right:212.30px;text-align:right;">3,500</div>
<div class="t " style="top:857px;height:24px;line-height:24px;font-size:12.7px;color:#000;left:1725.00px;">$</div>
<div class="t " style="top:857px;height:24px;line-height:24px;font-size:12.7px;color:#000;right:123.30px;text-align:right;">3,500</div>
<div class="t " style="top:857px;height:24px;line-height:24px;font-size:12.7px;color:#000;left:1814.00px;">$</div>
<div class="t " style="top:857px;height:24px;line-height:24px;font-size:12.7px;color:#000;right:34.30px;text-align:right;">3,500</div>
<div class="t " style="top:879px;height:24px;line-height:24px;font-size:12.7px;color:#000;left:924.00px;">$</div>
<div class="t " style="top:879px;height:24px;line-height:24px;font-size:12.7px;color:#000;right:924.30px;text-align:right;">3,500</div>
<div class="t " style="top:879px;height:24px;line-height:24px;font-size:12.7px;color:#000;left:1013.00px;">$</div>
<div class="t " style="top:879px;height:24px;line-height:24px;font-size:12.7px;color:#000;right:835.30px;text-align:right;">3,500</div>
<div class="t " style="top:879px;height:24px;line-height:24px;font-size:12.7px;color:#000;left:1102.00px;">$</div>
<div class="t " style="top:879px;height:24px;line-height:24px;font-size:12.7px;color:#000;right:746.30px;text-align:right;">3,500</div>
<div class="t " style="top:879px;height:24px;line-height:24px;font-size:12.7px;color:#000;left:1191.00px;">$</div>
<div class="t " style="top:879px;height:24px;line-height:24px;font-size:12.7px;color:#000;right:657.30px;text-align:right;">3,500</div>
<div class="t " style="top:879px;height:24px;line-height:24px;font-size:12.7px;color:#000;left:1280.00px;">$</div>
<div class="t " style="top:879px;height:24px;line-height:24px;font-size:12.7px;color:#000;right:568.30px;text-align:right;">3,500</div>
<div class="t " style="top:879px;height:24px;line-height:24px;font-size:12.7px;color:#000;left:1369.00px;">$</div>
<div class="t " style="top:879px;height:24px;line-height:24px;font-size:12.7px;color:#000;right:479.30px;text-align:right;">3,500</div>
<div class="t " style="top:879px;height:24px;line-height:24px;font-size:12.7px;color:#000;left:1458.00px;">$</div>
<div class="t " style="top:879px;height:24px;line-height:24px;font-size:12.7px;color:#000;right:390.30px;text-align:right;">3,500</div>
<div class="t " style="top:879px;height:24px;line-height:24px;font-size:12.7px;color:#000;left:1547.00px;">$</div>
<div class="t " style="top:879px;height:24px;line-height:24px;font-size:12.7px;color:#000;right:301.30px;text-align:right;">3,500</div>
<div class="t " style="top:879px;height:24px;line-height:24px;font-size:12.7px;color:#000;left:1636.00px;">$</div>
<div class="t " style="top:879px;height:24px;line-height:24px;font-size:12.7px;color:#000;right:212.30px;text-align:right;">3,500</div>
<div class="t " style="top:879px;height:24px;line-height:24px;font-size:12.7px;color:#000;left:1725.00px;">$</div>
<div class="t " style="top:879px;height:24px;line-height:24px;font-size:12.7px;color:#000;right:123.30px;text-align:right;">3,500</div>
<div class="t " style="top:879px;height:24px;line-height:24px;font-size:12.7px;color:#000;left:1814.00px;">$</div>
<div class="t " style="top:879px;height:24px;line-height:24px;font-size:12.7px;color:#000;right:34.30px;text-align:right;">3,500</div>
<div class="t " style="top:286px;height:24px;line-height:24px;font-size:12.7px;color:#9c9c9c;letter-spacing:-0.179px;font-style:italic;left:334.90px;width:120px;text-align:center;">76.00%</div>
<div class="t " style="top:286px;height:24px;line-height:24px;font-size:12.7px;color:#9c9c9c;letter-spacing:-0.179px;font-style:italic;left:422.90px;width:120px;text-align:center;">75.52%</div>
<div class="t " style="top:286px;height:24px;line-height:24px;font-size:12.7px;color:#9c9c9c;letter-spacing:-0.179px;font-style:italic;left:518.40px;width:120px;text-align:center;">74.54%</div>
<div class="t " style="top:286px;height:24px;line-height:24px;font-size:12.7px;color:#9c9c9c;letter-spacing:-0.179px;font-style:italic;left:618.40px;width:120px;text-align:center;">73.01%</div>
<div class="t " style="top:286px;height:24px;line-height:24px;font-size:12.7px;color:#9c9c9c;letter-spacing:-0.179px;font-style:italic;left:716.40px;width:120px;text-align:center;">71.12%</div>
<div class="t " style="top:286px;height:24px;line-height:24px;font-size:12.7px;color:#9c9c9c;letter-spacing:-0.179px;font-style:italic;left:898.90px;width:120px;text-align:center;">76.00%</div>
<div class="t " style="top:286px;height:24px;line-height:24px;font-size:12.7px;color:#9c9c9c;letter-spacing:-0.179px;font-style:italic;left:987.90px;width:120px;text-align:center;">76.00%</div>
<div class="t " style="top:286px;height:24px;line-height:24px;font-size:12.7px;color:#9c9c9c;letter-spacing:-0.179px;font-style:italic;left:1076.90px;width:120px;text-align:center;">76.00%</div>
<div class="t " style="top:286px;height:24px;line-height:24px;font-size:12.7px;color:#9c9c9c;letter-spacing:-0.179px;font-style:italic;left:1165.90px;width:120px;text-align:center;">76.00%</div>
<div class="t " style="top:286px;height:24px;line-height:24px;font-size:12.7px;color:#9c9c9c;letter-spacing:-0.179px;font-style:italic;left:1254.90px;width:120px;text-align:center;">76.00%</div>
<div class="t " style="top:286px;height:24px;line-height:24px;font-size:12.7px;color:#9c9c9c;letter-spacing:-0.179px;font-style:italic;left:1343.90px;width:120px;text-align:center;">76.00%</div>
<div class="t " style="top:286px;height:24px;line-height:24px;font-size:12.7px;color:#9c9c9c;letter-spacing:-0.179px;font-style:italic;left:1432.90px;width:120px;text-align:center;">76.00%</div>
<div class="t " style="top:286px;height:24px;line-height:24px;font-size:12.7px;color:#9c9c9c;letter-spacing:-0.179px;font-style:italic;left:1521.90px;width:120px;text-align:center;">76.00%</div>
<div class="t " style="top:286px;height:24px;line-height:24px;font-size:12.7px;color:#9c9c9c;letter-spacing:-0.179px;font-style:italic;left:1610.90px;width:120px;text-align:center;">76.00%</div>
<div class="t " style="top:286px;height:24px;line-height:24px;font-size:12.7px;color:#9c9c9c;letter-spacing:-0.179px;font-style:italic;left:1699.90px;width:120px;text-align:center;">76.00%</div>
<div class="t " style="top:286px;height:24px;line-height:24px;font-size:12.7px;color:#9c9c9c;letter-spacing:-0.179px;font-style:italic;left:1788.90px;width:120px;text-align:center;">76.00%</div>
<div style="left:1894px;top:0px;width:27px;height:907px;background:#e6e6e6;"></div>
<div style="left:1894px;top:23px;width:1px;height:883px;background:#a0a0a0;"></div>
<div style="left:1898px;top:108px;width:19px;height:779px;background:#f0f0f0;"></div>
<div style="left:1898px;top:8px;width:17px;height:17px;background:#fff;border:1px solid #ababab"></div>
<div style="left:1898px;top:27px;width:17px;height:79px;background:#fff;border:1px solid #ababab"></div>
<div style="left:1898px;top:887px;width:17px;height:17px;background:#fff;border:1px solid #ababab"></div>
<svg style="left:1903px;top:14px" width="9" height="6"><path d="M0 5 L4.5 0.5 L9 5 Z" fill="#222"/></svg>
<svg style="left:1903px;top:895px" width="9" height="6"><path d="M0 0.5 L9 0.5 L4.5 5 Z" fill="#222"/></svg>
<div style="left:0px;top:906px;width:1895px;height:1px;background:#a0a0a0;"></div>
<div style="left:0px;top:907px;width:1921px;height:31px;background:#e6e6e6;"></div>
<div style="left:0px;top:938px;width:1921px;height:1px;background:#c8c8c8;"></div>
<div style="left:0px;top:939px;width:1921px;height:27px;background:#f3f3f3;"></div>
<div style="left:722px;top:906px;width:191px;height:27px;background:#fff;"></div>
<div style="left:722px;top:906px;width:1px;height:27px;background:#a0a0a0;"></div>
<div style="left:912px;top:906px;width:1px;height:27px;background:#a0a0a0;"></div>
<div style="left:722px;top:933px;width:191px;height:2px;background:#217346;"></div>
<div style="left:112px;top:910px;width:1px;height:24px;background:#ababab;"></div>
<div style="left:278px;top:910px;width:1px;height:24px;background:#ababab;"></div>
<div style="left:395px;top:910px;width:1px;height:24px;background:#ababab;"></div>
<div style="left:562px;top:910px;width:1px;height:24px;background:#ababab;"></div>
<div style="left:1075px;top:910px;width:1px;height:24px;background:#ababab;"></div>
<div style="left:1224px;top:910px;width:1px;height:24px;background:#ababab;"></div>
<div style="left:1334px;top:910px;width:1px;height:24px;background:#ababab;"></div>
<div class="t " style="top:908px;height:24px;line-height:24px;font-size:17.2px;color:#444;letter-spacing:0.037px;left:127.50px;">Table of Contents</div>
<div class="t " style="top:908px;height:24px;line-height:24px;font-size:17.2px;color:#444;letter-spacing:0.024px;left:292.50px;">Input Sheet</div>
<div class="t " style="top:908px;height:24px;line-height:24px;font-size:17.2px;color:#444;letter-spacing:-0.088px;left:412.50px;">Startup Summary</div>
<div class="t " style="top:908px;height:24px;line-height:24px;font-size:17.2px;color:#444;letter-spacing:-0.499px;left:577.50px;">Revenue Analysis</div>
<div class="t " style="top:908px;height:24px;line-height:24px;font-size:17.2px;color:#444;letter-spacing:-0.359px;left:928.50px;">Financial Analysis</div>
<div class="t " style="top:908px;height:24px;line-height:24px;font-size:17.2px;color:#444;letter-spacing:-0.096px;left:1091.25px;">Working Sheet</div>
<div class="t " style="top:908px;height:24px;line-height:24px;font-size:17.2px;color:#444;letter-spacing:-0.238px;left:1238.75px;">Dashboard</div>
<div class="t " style="top:908px;height:24px;line-height:24px;font-size:17.2px;color:#217346;letter-spacing:-0.353px;font-weight:bold;left:735.00px;">Financial Statements</div>
<svg style="left:30px;top:917px" width="6" height="10"><path d="M5.5 0.3 L5.5 9.7 L0.3 5 Z" fill="#c3c3c3"/></svg>
<svg style="left:62px;top:917px" width="6" height="10"><path d="M0.3 0.3 L0.3 9.7 L5.5 5 Z" fill="#c3c3c3"/></svg>
<svg style="left:1372px;top:912px" width="22" height="22"><circle cx="11" cy="11" r="9.3" fill="none" stroke="#868686" stroke-width="1.3"/><path d="M6 11 H16 M11 6 V16" stroke="#747474" stroke-width="1.8"/></svg>
<div style="left:1491px;top:916px;width:3px;height:3px;background:#bdbdbd;"></div>
<div style="left:1491px;top:921px;width:3px;height:3px;background:#bdbdbd;"></div>
<div style="left:1491px;top:926px;width:3px;height:3px;background:#bdbdbd;"></div>
<div style="left:1511px;top:913px;width:382px;height:19px;background:#f0f0f0;"></div>
<div style="left:1511px;top:913px;width:17px;height:17px;background:#fff;border:1px solid #ababab"></div>
<div style="left:1530px;top:913px;width:90px;height:17px;background:#fff;border:1px solid #ababab"></div>
<div style="left:1874px;top:913px;width:17px;height:17px;background:#fff;border:1px solid #ababab"></div>
<svg style="left:1516px;top:917px" width="7" height="11"><path d="M6 0 L6 11 L0.5 5.5 Z" fill="#222"/></svg>
<svg style="left:1881px;top:917px" width="7" height="11"><path d="M0.5 0 L0.5 11 L6 5.5 Z" fill="#222"/></svg>
<div class="t " style="top:941px;height:24px;line-height:24px;font-size:12px;color:#2b2b2b;letter-spacing:0.222px;left:14.20px;">Ready</div>
<div class="t " style="top:941px;height:24px;line-height:24px;font-size:12px;color:#2b2b2b;letter-spacing:0.108px;left:71.50px;">Calculate</div>
<div class="t " style="top:941px;height:24px;line-height:24px;font-size:12px;color:#262626;letter-spacing:0.331px;font-weight:bold;left:211.50px;">Accessibility: Investigate</div>
<div class="t " style="top:941px;height:24px;line-height:24px;font-size:12px;color:#2b2b2b;letter-spacing:0.341px;left:1430.00px;">Display Settings</div>
<div class="t " style="top:941px;height:24px;line-height:24px;font-size:12px;color:#2b2b2b;letter-spacing:-0.006px;left:1877.00px;">80%</div>
<svg style="left:144px;top:939px" width="72" height="27" viewBox="0 0 72 27">
<rect x="7.6" y="6.5" width="12.8" height="12.8" fill="#fff" stroke="#595959" stroke-width="1"/>
<rect x="14" y="6.1" width="6.9" height="3.4" fill="#595959"/>
<path d="M13.1 11.5H14.9M16.1 11.5H18M10.1 14.5H11.9M13.1 14.5H14.9M16.1 14.5H18M10.1 17.5H11.9M13.1 17.5H14.9M16.1 17.5H18" stroke="#595959" stroke-width="0.9"/>
<circle cx="9.4" cy="8.4" r="3.9" fill="#f3f3f3"/>
<circle cx="9.4" cy="8.4" r="3.3" fill="#595959"/>
<path d="M50.9 6.5 A6.9 6.9 0 0 0 52.4 20.2" fill="none" stroke="#4a4a4a" stroke-width="1.35" stroke-dasharray="3.3 1.3"/>
<path d="M52.5 5 V12" stroke="#4a4a4a" stroke-width="1.2"/>
<path d="M50 11.2 H55 L52.5 13.9 Z" fill="#4a4a4a"/>
<path d="M55.8 11.3 H59.5" stroke="#4a4a4a" stroke-width="1.2"/>
<path d="M58.2 8.9 L61.2 11.3 L58.2 13.7 Z" fill="#4a4a4a"/>
<path d="M54.8 15 L63.3 22.3" stroke="#4a4a4a" stroke-width="1.9"/>
<path d="M63.2 15 L54.8 22.4" stroke="#4a4a4a" stroke-width="1.5"/>
</svg>
<svg style="left:1400px;top:939px" width="72" height="27" viewBox="0 0 72 27">
<rect x="9.2" y="4.1" width="18.5" height="12.8" rx="1.6" fill="#4f4f4f"/>
<path d="M14.3 20.2 H17.8 V21.7 H13 Z" fill="#4f4f4f"/>
<path d="M20.95 12.64 L21.38 11.20 L23.62 11.20 L24.05 12.64 L25.85 13.68 L27.31 13.33 L28.43 15.27 L27.39 16.36 L27.39 18.44 L28.43 19.53 L27.31 21.47 L25.85 21.12 L24.05 22.16 L23.62 23.60 L21.38 23.60 L20.95 22.16 L19.15 21.12 L17.69 21.47 L16.57 19.53 L17.61 18.44 L17.61 16.36 L16.57 15.27 L17.69 13.33 L19.15 13.68 Z" fill="#f3f3f3"/>
<path d="M21.29 13.69 L21.56 12.18 L23.44 12.18 L23.71 13.69 L25.11 14.50 L26.55 13.98 L27.49 15.60 L26.31 16.59 L26.31 18.21 L27.49 19.20 L26.55 20.82 L25.11 20.30 L23.71 21.11 L23.44 22.62 L21.56 22.62 L21.29 21.11 L19.89 20.30 L18.45 20.82 L17.51 19.20 L18.69 18.21 L18.69 16.59 L17.51 15.60 L18.45 13.98 L19.89 14.50 Z" fill="#4f4f4f"/>
<circle cx="22.5" cy="17.4" r="1.7" fill="#f8f8f8"/>
</svg>
<div style="left:1547px;top:939px;width:50px;height:26px;background:#c6c6c6;"></div>
<svg style="left:1564px;top:944px" width="16" height="16"><rect x="0.5" y="0.5" width="15" height="15" fill="#d6d6d6"/><path d="M0.5 0.5H15.5V15.5H0.5Z M0.5 5.5H15.5 M0.5 10.5H15.5 M5.5 0.5V15.5 M10.5 0.5V15.5" fill="none" stroke="#6a6a6a" stroke-width="1"/></svg>
<svg style="left:1613px;top:944px" width="17" height="15"><rect x="0.5" y="0.5" width="16" height="14" fill="#fff" stroke="#6a6a6a"/><rect x="4.5" y="2.5" width="8" height="10" fill="#fff" stroke="#6a6a6a"/><path d="M6.5 5.5H10.5M6.5 7.5H10.5M6.5 9.5H10.5" stroke="#6a6a6a" stroke-width="0.8"/></svg>
<svg style="left:1663px;top:944px" width="17" height="16"><rect x="0.5" y="0.5" width="16" height="15" fill="#fff" stroke="#6a6a6a"/><path d="M0.5 9.5H10.5 M5.5 0.5V9.5 M10.5 0.5V9.5" fill="none" stroke="#6a6a6a"/></svg>
<div style="left:1704px;top:951px;width:10px;height:1px;background:#333;"></div>
<div style="left:1720px;top:952px;width:125px;height:1px;background:#333;"></div>
<div style="left:1767px;top:945px;width:6px;height:14px;background:#444;"></div>
<div style="left:1782px;top:949px;width:1px;height:7px;background:#333;"></div>
<div style="left:1851px;top:951px;width:10px;height:1px;background:#333;"></div>
<div style="left:1855px;top:947px;width:1px;height:9px;background:#333;"></div>
<div style="left:1919px;top:0px;width:1px;height:966px;background:#f6f6f6;"></div>
<div style="left:1920px;top:0px;width:1px;height:966px;background:#000;"></div>
</body></html>
